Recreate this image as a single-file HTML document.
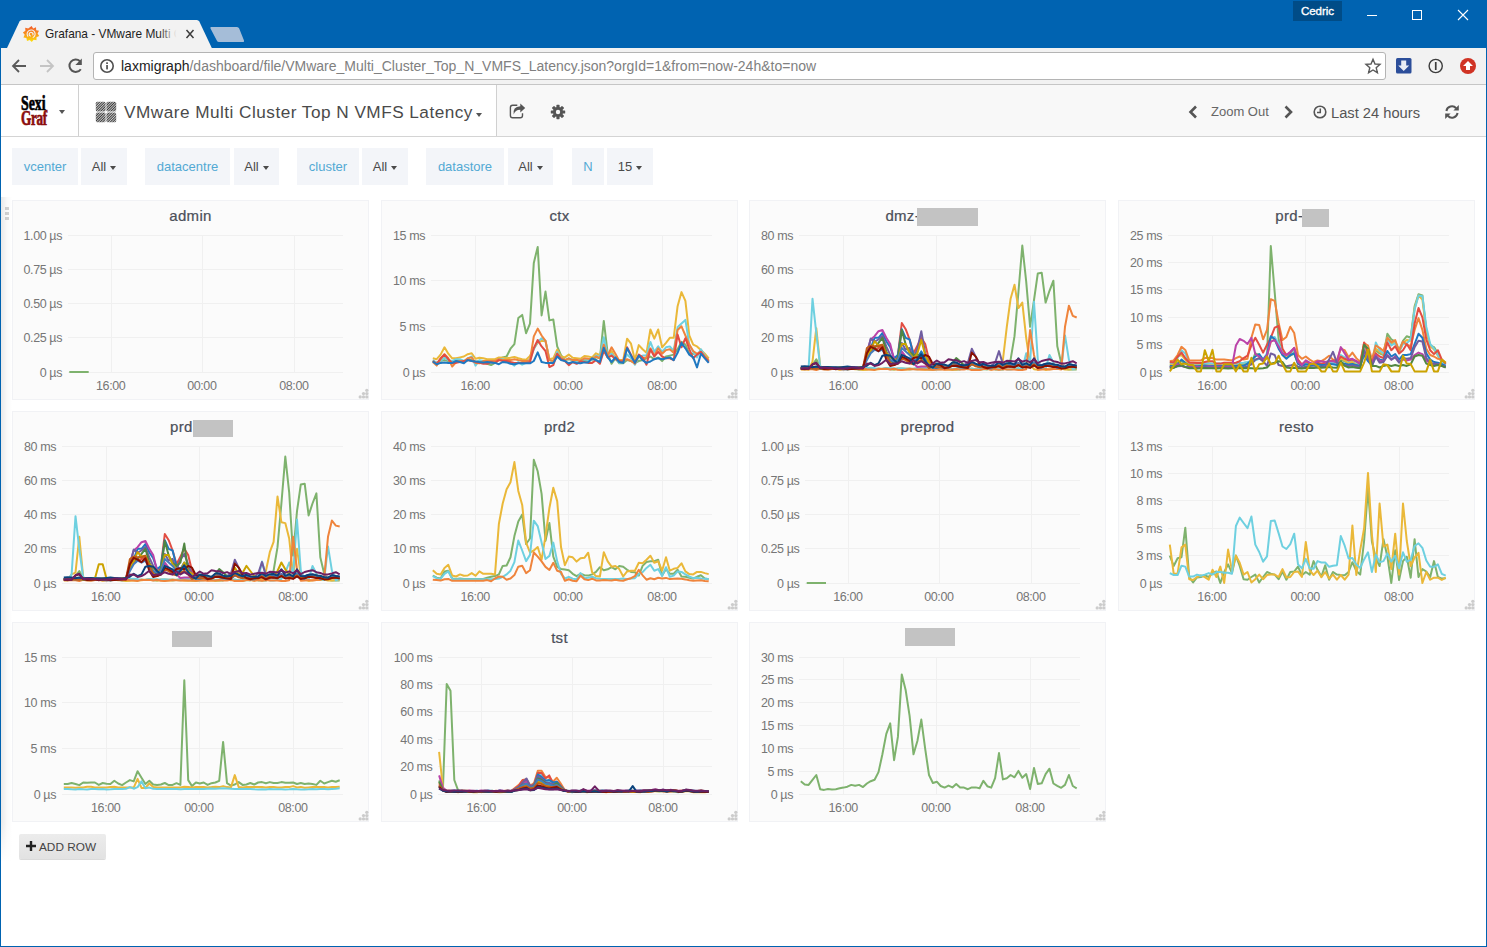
<!DOCTYPE html><html><head><meta charset="utf-8"><title>Grafana - VMware Multi Cluster Top N VMFS Latency</title><style>
*{box-sizing:border-box;margin:0;padding:0}
html,body{width:1487px;height:947px;overflow:hidden;background:#fff}
body{font-family:"Liberation Sans",sans-serif;position:relative;color:#444}
.abs{position:absolute}
#titlebar{left:0;top:0;width:1487px;height:48px;background:#0063b1}
#toolbar{left:1px;top:48px;width:1485px;height:37px;background:#f2f2f2;border-bottom:1px solid #c6c6c6}
#urlbox{left:92px;top:4px;width:1293px;height:28px;background:#fff;border:1px solid #b4b4b4;border-radius:3px}
#nav{left:1px;top:85px;width:1485px;height:52px;background:#f8f8f8;border-bottom:1px solid #d4d4d4}
#navwhite{left:0;top:0;width:496px;height:51px;background:#fff;border-right:1px solid #d0d0d0}
.wb{background:#0063b1}
.tv{top:148px;height:37px;background:#f3f5f9;font-size:13px;line-height:37px;text-align:center;white-space:nowrap}
.tv.l{color:#52a9d4}
.tv.v{color:#4a4a4a}
.caret{display:inline-block;width:0;height:0;border-left:3.5px solid transparent;border-right:3.5px solid transparent;border-top:4px solid #4a4a4a;vertical-align:middle;margin-left:4px}
.panel{background:#fbfbfb;border:1px solid #f1f2f5;width:357px;height:200px}
.ptitle{left:0;width:355px;top:5px;text-align:center;font-size:15px;font-weight:normal;-webkit-text-stroke:0.22px #4b4f59;color:#4b4f59;line-height:20px;white-space:nowrap;letter-spacing:0.3px}
.red{display:inline-block;background:#c0c0c0;vertical-align:top}
svg text{font-family:"Liberation Sans",sans-serif;font-size:12.5px;fill:#767676;letter-spacing:-0.4px}
</style></head><body>
<div id="titlebar" class="abs">
  <svg class="abs" style="left:0;top:0" width="1487" height="48" viewBox="0 0 1487 48">
    <path d="M7 48 L19.5 21.5 Q20.3 20 22 20 L196.8 20 Q198.5 20 199.3 21.5 L211.8 48 Z" fill="#f2f2f2"/>
    <path d="M211 27 L237 27 Q238.5 27 239.2 28.5 L244 40.5 Q244.5 42 243 42 L219 42 Q217.5 42 216.8 40.5 L210.5 28.5 Q210 27 211 27Z" fill="#a5bdd8"/>
    <rect x="1293" y="1" width="49" height="20" fill="#004c87"/>
    <g stroke="#fff" stroke-width="1" fill="none" shape-rendering="crispEdges">
      <line x1="1367" x2="1377" y1="15.5" y2="15.5"/>
      <rect x="1412.5" y="10.5" width="9" height="9"/>
    </g>
    <path d="M1458 10 L1468 20 M1468 10 L1458 20" stroke="#fff" stroke-width="1.1" fill="none"/>
    <!-- grafana favicon -->
    <defs><linearGradient id="gfav" x1="0" y1="0" x2="0" y2="1"><stop offset="0" stop-color="#f1592a"/><stop offset="0.55" stop-color="#f99b1c"/><stop offset="1" stop-color="#fde408"/></linearGradient></defs>
    <g transform="translate(31,34)">
      <path d="M0.6-8 L2.2-5.6 L5-6.8 L5.2-3.8 L8-3.2 L6.6-0.5 L8.2 2 L5.5 3.3 L5.5 6.3 L2.6 5.7 L0.8 8 L-1.3 5.9 L-4 7 L-4.6 4.1 L-7.6 3.4 L-6.3 0.7 L-8.1-1.6 L-5.6-3.2 L-5.8-6.2 L-2.8-5.6 Z" fill="url(#gfav)"/>
      <path d="M-3.2 2.2 A4 4 0 1 1 2.2 3.4 M1.9 0.9 A1.9 1.9 0 1 0 -0.6 2" fill="none" stroke="#f2f2f2" stroke-width="1.1" stroke-linecap="round"/>
    </g>
    <path d="M186.5 30 L193.5 38 M193.5 30 L186.5 38" stroke="#3c3c3c" stroke-width="1.5" fill="none"/>
  </svg>
  <div class="abs" style="left:45px;top:25px;width:134px;height:18px;overflow:hidden;font-size:11.9px;line-height:18px;color:#1e1e1e;white-space:nowrap">Grafana - VMware Multi Cluster</div>
  <div class="abs" style="left:159px;top:24px;width:22px;height:20px;background:linear-gradient(90deg,rgba(242,242,242,0),#f2f2f2 80%)"></div>
  <div class="abs" style="left:1293px;top:1px;width:49px;height:20px;font-size:11.5px;line-height:20px;color:#fff;text-align:center;font-weight:normal;-webkit-text-stroke:0.35px #fff;letter-spacing:0px">Cedric</div>
</div>
<div class="abs wb" style="left:0;top:48px;width:1px;height:899px"></div>
<div class="abs wb" style="left:1486px;top:48px;width:1px;height:899px"></div>
<div class="abs wb" style="left:0;top:946px;width:1487px;height:1px"></div>
<div id="toolbar" class="abs">
  <svg class="abs" style="left:0;top:0" width="92" height="36" viewBox="1 48 92 36">
    <g fill="none" stroke="#5a5a5a" stroke-width="1.8">
      <path d="M26 66 L13 66 M19 60 L13 66 L19 72"/>
    </g>
    <g fill="none" stroke="#c4c4c4" stroke-width="1.8">
      <path d="M40 66 L53 66 M47 60 L53 66 L47 72"/>
    </g>
    <path d="M80 61.3 A6.2 6.2 0 1 0 80.8 69.2" fill="none" stroke="#555" stroke-width="2"/>
    <path d="M81.8 58.6 L81.8 65 L75.4 65 Z" fill="#555"/>
  </svg>
  <div id="urlbox" class="abs">
    <svg class="abs" style="left:5px;top:5px" width="16" height="16" viewBox="0 0 16 16"><circle cx="8" cy="8" r="6.2" fill="none" stroke="#505050" stroke-width="1.6"/><rect x="7.2" y="7" width="1.7" height="4.4" fill="#505050"/><rect x="7.2" y="4.3" width="1.7" height="1.7" fill="#505050"/></svg>
    <div class="abs" style="left:27px;top:4px;font-size:14px;line-height:18px;white-space:nowrap;color:#808080"><span style="color:#222">laxmigraph</span>/dashboard/file/VMware_Multi_Cluster_Top_N_VMFS_Latency.json?orgId=1&amp;from=now-24h&amp;to=now</div>
    <svg class="abs" style="left:1270px;top:4px" width="18" height="18" viewBox="0 0 18 18"><path d="M9 2.2 L11 7 L16 7.4 L12.2 10.7 L13.4 15.7 L9 13 L4.6 15.7 L5.8 10.7 L2 7.4 L7 7 Z" fill="none" stroke="#5a5a5a" stroke-width="1.4" stroke-linejoin="miter"/></svg>
  </div>
  <svg class="abs" style="left:1390px;top:6px" width="92" height="26" viewBox="1391 54 92 26">
    <rect x="1396" y="58" width="15.5" height="15.5" rx="1.5" fill="#2c4e9a"/>
    <path d="M1401.2 60.5 h5 v5 h3 l-5.5 5.5 l-5.5 -5.5 h3 z" fill="#e9edf5"/>
    <circle cx="1435.7" cy="66" r="6.6" fill="none" stroke="#3c3c3c" stroke-width="1.4"/>
    <rect x="1434.9" y="62" width="1.7" height="8" fill="#3c3c3c"/>
    <circle cx="1468" cy="66" r="8" fill="#d03324"/>
    <path d="M1468 61 l5 5 h-3 v4 h-4 v-4 h-3 z" fill="#fff"/>
  </svg>
</div>
<div id="nav" class="abs">
  <div id="navwhite" class="abs"></div>
  <div class="abs" style="left:77px;top:0;width:1px;height:51px;background:#d0d0d0"></div>
  <div class="abs" style="left:20px;top:11px;font-family:'Liberation Serif',serif;font-weight:bold;font-size:21px;line-height:15px;color:#000;-webkit-text-stroke:0.7px #000;transform:scaleX(0.66);transform-origin:0 0;white-space:nowrap">Sexi<br><span style="color:#8a0c0c;-webkit-text-stroke:0.7px #8a0c0c;font-size:20px;letter-spacing:-0.5px">Graf</span></div>
  <div class="abs caret" style="left:58px;top:25px;margin:0;border-top-color:#555"></div>
  <svg class="abs" style="left:94px;top:16px" width="22" height="22" viewBox="0 0 22 22">
    <defs><pattern id="hat" width="1.8" height="1.8" patternUnits="userSpaceOnUse" patternTransform="rotate(-45)"><rect width="1.8" height="1.15" fill="#3c3c3c"/></pattern></defs>
    <rect x="0.8" y="0.8" width="9.8" height="9.8" rx="1.5" fill="url(#hat)"/><rect x="11.4" y="0.8" width="9.8" height="9.8" rx="1.5" fill="url(#hat)"/><rect x="0.8" y="11.4" width="9.8" height="9.8" rx="1.5" fill="url(#hat)"/><rect x="11.4" y="11.4" width="9.8" height="9.8" rx="1.5" fill="url(#hat)"/>
  </svg>
  <div class="abs" style="left:123px;top:14px;font-size:17.2px;line-height:26px;color:#4a4a4a;white-space:nowrap;letter-spacing:0.48px">VMware Multi Cluster Top N VMFS Latency</div>
  <div class="abs caret" style="left:475px;top:28px;margin:0;border-top-color:#555"></div>
  <svg class="abs" style="left:507px;top:18px" width="20" height="17" viewBox="0 0 20 17">
    <path d="M9.3 2.3 H4.6 Q2.4 2.3 2.4 4.5 V12.6 Q2.4 14.8 4.6 14.8 H12.3 Q14.5 14.8 14.5 12.6 V10.2" fill="none" stroke="#555" stroke-width="1.4"/>
    <path d="M12.3 0.6 L17.2 5 L12.3 9.4 V6.7 Q7 6.7 5.7 11.6 Q4.4 3.6 12.3 3.3 Z" fill="#555"/>
  </svg>
  <svg class="abs" style="left:549px;top:19px" width="16" height="16" viewBox="-8 -8 16 16">
    <g fill="#555"><circle r="5"/>
    <g><rect x="-1.6" y="-7.2" width="3.2" height="14.4" rx="0.6"/><rect x="-1.6" y="-7.2" width="3.2" height="14.4" rx="0.6" transform="rotate(45)"/><rect x="-1.6" y="-7.2" width="3.2" height="14.4" rx="0.6" transform="rotate(90)"/><rect x="-1.6" y="-7.2" width="3.2" height="14.4" rx="0.6" transform="rotate(135)"/></g></g>
    <circle r="2.2" fill="#f8f8f8"/>
  </svg>
  <svg class="abs" style="left:1185px;top:18px" width="112" height="18" viewBox="1186 103 112 18">
    <path d="M1196 106.5 L1190.5 112 L1196 117.5" fill="none" stroke="#555" stroke-width="2.6"/>
    <path d="M1285.5 106.5 L1291 112 L1285.5 117.5" fill="none" stroke="#555" stroke-width="2.6"/>
  </svg>
  <div class="abs" style="left:1210px;top:18px;font-size:13px;line-height:18px;color:#666;white-space:nowrap">Zoom Out</div>
  <svg class="abs" style="left:1311px;top:19px" width="16" height="16" viewBox="-8 -8 16 16"><circle r="5.8" fill="none" stroke="#555" stroke-width="1.6"/><path d="M0.3 -3.6 V0.6 H-3" fill="none" stroke="#555" stroke-width="1.5"/></svg>
  <div class="abs" style="left:1330px;top:17px;font-size:14.7px;line-height:22px;color:#555;white-space:nowrap">Last 24 hours</div>
  <svg class="abs" style="left:1443px;top:19px" width="16" height="16" viewBox="-8 -8 16 16">
    <path d="M-5.6 -1 A5.7 5.7 0 0 1 4.2 -3.8" fill="none" stroke="#555" stroke-width="2"/>
    <path d="M5.6 1 A5.7 5.7 0 0 1 -4.2 3.8" fill="none" stroke="#555" stroke-width="2"/>
    <path d="M6.8 -7 V-1.6 H1.4 Z" fill="#555"/><path d="M-6.8 7 V1.6 H-1.4 Z" fill="#555"/>
  </svg>
</div>
<div class="abs tv l" style="left:12px;width:66px">vcenter</div><div class="abs tv v" style="left:81px;width:46px">All<span class="caret"></span></div>
<div class="abs tv l" style="left:145px;width:85px">datacentre</div><div class="abs tv v" style="left:234px;width:45px">All<span class="caret"></span></div>
<div class="abs tv l" style="left:297px;width:62px">cluster</div><div class="abs tv v" style="left:362px;width:46px">All<span class="caret"></span></div>
<div class="abs tv l" style="left:426px;width:78px">datastore</div><div class="abs tv v" style="left:508px;width:45px">All<span class="caret"></span></div>
<div class="abs tv l" style="left:572px;width:32px">N</div><div class="abs tv v" style="left:607px;width:46px">15<span class="caret"></span></div>
<svg class="abs" style="left:4px;top:205.5px" width="6" height="18" viewBox="0 0 6 18"><g fill="#d4d4d4"><rect x="1" y="1" width="4" height="3"/><rect x="1" y="6" width="4" height="3"/><rect x="1" y="11" width="4" height="3"/></g></svg>
<div class="abs" style="left:1px;top:197px;width:11px;height:665px;background:linear-gradient(90deg,rgba(0,0,0,0.085),rgba(0,0,0,0.025) 55%,rgba(0,0,0,0))"></div><div class="abs" style="left:1px;top:822px;width:11px;height:40px;background:linear-gradient(180deg,rgba(255,255,255,0),#fff)"></div>

<div class="abs panel" style="left:12px;top:200px"><div class="abs ptitle">admin</div><svg class="abs" style="left:0;top:0;overflow:visible" width="355" height="198" viewBox="1 1 355 198"><g stroke="#f0f0f0" stroke-width="1" shape-rendering="crispEdges"><line x1="56.0" x2="330.7" y1="35.5" y2="35.5"/><line x1="56.0" x2="330.7" y1="69.5" y2="69.5"/><line x1="56.0" x2="330.7" y1="103.5" y2="103.5"/><line x1="56.0" x2="330.7" y1="137.5" y2="137.5"/><line x1="56.0" x2="330.7" y1="172.5" y2="172.5"/><line x1="99.5" x2="99.5" y1="35" y2="173"/><line x1="190.5" x2="190.5" y1="35" y2="173"/><line x1="282.5" x2="282.5" y1="35" y2="173"/></g><text x="50.0" y="40.0" text-anchor="end">1.00 µs</text><text x="50.0" y="74.0" text-anchor="end">0.75 µs</text><text x="50.0" y="108.0" text-anchor="end">0.50 µs</text><text x="50.0" y="142.0" text-anchor="end">0.25 µs</text><text x="50.0" y="177.0" text-anchor="end">0 µs</text><text x="98.7" y="190" text-anchor="middle">16:00</text><text x="189.8" y="190" text-anchor="middle">00:00</text><text x="281.9" y="190" text-anchor="middle">08:00</text><polyline fill="none" stroke="#7eb26d" stroke-width="2" stroke-linejoin="round" points="57.3,172.0 76.7,172.0"/><g fill="#cccccc"><circle cx="354.8" cy="190.3" r="1.65"/><circle cx="354.8" cy="193.6" r="1.65"/><circle cx="351.5" cy="193.6" r="1.65"/><circle cx="354.8" cy="196.9" r="1.65"/><circle cx="351.5" cy="196.9" r="1.65"/><circle cx="348.2" cy="196.9" r="1.65"/></g></svg></div>
<div class="abs panel" style="left:381px;top:200px"><div class="abs ptitle">ctx</div><svg class="abs" style="left:0;top:0;overflow:visible" width="355" height="198" viewBox="1 1 355 198"><g stroke="#f0f0f0" stroke-width="1" shape-rendering="crispEdges"><line x1="50.0" x2="330.6" y1="35.5" y2="35.5"/><line x1="50.0" x2="330.6" y1="80.5" y2="80.5"/><line x1="50.0" x2="330.6" y1="126.5" y2="126.5"/><line x1="50.0" x2="330.6" y1="172.5" y2="172.5"/><line x1="94.5" x2="94.5" y1="35" y2="173"/><line x1="187.5" x2="187.5" y1="35" y2="173"/><line x1="281.5" x2="281.5" y1="35" y2="173"/></g><text x="44.0" y="40.0" text-anchor="end">15 ms</text><text x="44.0" y="85.0" text-anchor="end">10 ms</text><text x="44.0" y="131.0" text-anchor="end">5 ms</text><text x="44.0" y="177.0" text-anchor="end">0 µs</text><text x="94.1" y="190" text-anchor="middle">16:00</text><text x="187.0" y="190" text-anchor="middle">00:00</text><text x="281.0" y="190" text-anchor="middle">08:00</text><polyline fill="none" stroke="#7eb26d" stroke-width="2" stroke-linejoin="round" points="51.8,161.0 55.7,162.9 59.6,161.0 63.5,160.1 67.3,161.0 71.2,162.0 75.1,161.0 79.0,161.0 82.9,162.0 86.8,160.1 90.7,160.1 94.5,162.0 98.4,161.0 102.3,162.0 106.2,163.8 110.1,165.1 114.0,162.9 117.9,159.2 121.7,157.4 125.6,156.5 129.5,148.7 133.4,144.1 137.3,118.1 141.2,114.9 145.1,133.2 149.0,123.6 152.8,62.9 156.7,46.9 160.6,115.4 164.5,91.6 168.4,120.4 172.3,119.5 176.2,146.4 180.0,155.1 183.9,160.1 187.8,159.2 191.7,160.1 195.6,161.0 199.5,161.0 203.4,160.1 207.2,161.0 211.1,160.1 215.0,157.4 218.9,158.3 222.8,120.9 226.7,153.7 230.6,163.8 234.4,158.3 238.3,163.3 242.2,163.3 246.1,160.1 250.0,161.0 253.9,162.9 257.8,161.0 261.6,160.1 265.5,158.3 269.4,156.5 273.3,159.2 277.2,157.4 281.1,161.0 285.0,156.5 288.8,155.6 292.7,154.6 296.6,149.2 300.5,141.9 304.4,144.6 308.3,153.7 312.2,153.7 316.0,155.6 319.9,150.1 323.8,156.5 327.7,161.0"/><polyline fill="none" stroke="#eab839" stroke-width="2" stroke-linejoin="round" points="51.8,158.3 55.7,159.2 59.6,154.6 63.5,147.3 67.3,153.7 71.2,158.3 75.1,158.3 79.0,157.4 82.9,156.5 86.8,154.2 90.7,153.3 94.5,158.8 98.4,157.8 102.3,158.3 106.2,159.2 110.1,159.2 114.0,159.2 117.9,157.4 121.7,157.8 125.6,158.3 129.5,157.8 133.4,156.9 137.3,158.3 141.2,159.2 145.1,159.7 149.0,156.0 152.8,148.3 156.7,142.8 160.6,140.9 164.5,140.9 168.4,159.2 172.3,158.3 176.2,149.6 180.0,156.5 183.9,157.4 187.8,154.6 191.7,157.8 195.6,158.3 199.5,158.8 203.4,156.0 207.2,156.5 211.1,157.4 215.0,153.3 218.9,155.1 222.8,149.2 226.7,157.4 230.6,151.0 234.4,158.3 238.3,160.1 242.2,160.1 246.1,138.7 250.0,143.7 253.9,160.1 257.8,145.1 261.6,149.2 265.5,152.8 269.4,129.5 273.3,138.7 277.2,129.5 281.1,147.3 285.0,142.8 288.8,137.8 292.7,137.8 296.6,106.2 300.5,92.1 304.4,100.8 308.3,135.5 312.2,144.6 316.0,146.4 319.9,150.1 323.8,153.7 327.7,158.3"/><polyline fill="none" stroke="#6ed0e0" stroke-width="2" stroke-linejoin="round" points="51.8,160.1 55.7,162.9 59.6,161.0 63.5,157.4 67.3,160.1 71.2,161.0 75.1,159.2 79.0,159.2 82.9,161.0 86.8,158.3 90.7,156.5 94.5,165.6 98.4,160.1 102.3,161.0 106.2,162.0 110.1,162.9 114.0,162.0 117.9,159.2 121.7,159.2 125.6,160.1 129.5,162.9 133.4,165.6 137.3,162.0 141.2,164.7 145.1,162.9 149.0,159.2 152.8,149.2 156.7,141.9 160.6,138.2 164.5,140.9 168.4,160.1 172.3,162.0 176.2,151.9 180.0,158.3 183.9,160.1 187.8,158.3 191.7,160.1 195.6,161.0 199.5,160.1 203.4,159.2 207.2,160.1 211.1,160.1 215.0,155.6 218.9,156.5 222.8,137.3 226.7,155.6 230.6,153.7 234.4,158.3 238.3,162.9 242.2,162.0 246.1,154.6 250.0,158.3 253.9,164.7 257.8,156.5 261.6,155.6 265.5,155.6 269.4,141.9 273.3,151.9 277.2,146.4 281.1,151.9 285.0,147.3 288.8,146.4 292.7,151.0 296.6,127.2 300.5,123.6 304.4,119.9 308.3,144.6 312.2,151.9 316.0,157.4 319.9,149.2 323.8,155.6 327.7,161.0"/><polyline fill="none" stroke="#ef843c" stroke-width="2" stroke-linejoin="round" points="51.8,162.0 55.7,165.6 59.6,159.2 63.5,154.2 67.3,158.3 71.2,166.5 75.1,162.0 79.0,161.0 82.9,162.0 86.8,158.3 90.7,157.4 94.5,162.9 98.4,163.3 102.3,161.0 106.2,161.0 110.1,161.0 114.0,161.0 117.9,159.2 121.7,160.1 125.6,160.1 129.5,160.1 133.4,159.2 137.3,160.1 141.2,161.0 145.1,161.0 149.0,160.1 152.8,136.4 156.7,128.6 160.6,135.5 164.5,140.9 168.4,160.1 172.3,161.0 176.2,153.7 180.0,158.3 183.9,160.1 187.8,158.3 191.7,160.1 195.6,159.7 199.5,160.6 203.4,158.3 207.2,158.8 211.1,159.2 215.0,156.5 218.9,158.3 222.8,144.6 226.7,155.6 230.6,147.3 234.4,153.7 238.3,161.0 242.2,160.1 246.1,159.2 250.0,161.0 253.9,163.8 257.8,155.6 261.6,158.3 265.5,157.4 269.4,148.3 273.3,155.6 277.2,148.3 281.1,153.7 285.0,150.1 288.8,149.2 292.7,152.8 296.6,130.0 300.5,126.3 304.4,135.5 308.3,144.6 312.2,151.0 316.0,153.7 319.9,151.9 323.8,156.5 327.7,160.1"/><polyline fill="none" stroke="#e24d42" stroke-width="2" stroke-linejoin="round" points="51.8,161.0 55.7,163.8 59.6,158.3 63.5,154.6 67.3,159.2 71.2,162.9 75.1,162.9 79.0,162.0 82.9,161.0 86.8,160.1 90.7,161.0 94.5,162.0 98.4,162.9 102.3,163.8 106.2,163.8 110.1,162.0 114.0,162.9 117.9,160.1 121.7,161.0 125.6,161.0 129.5,162.0 133.4,162.9 137.3,162.9 141.2,162.9 145.1,162.9 149.0,162.0 152.8,148.3 156.7,140.0 160.6,146.4 164.5,151.0 168.4,167.0 172.3,165.1 176.2,153.7 180.0,159.2 183.9,161.0 187.8,165.1 191.7,162.0 195.6,163.8 199.5,161.5 203.4,162.0 207.2,162.9 211.1,162.9 215.0,160.1 218.9,163.8 222.8,151.0 226.7,157.4 230.6,155.6 234.4,159.2 238.3,161.0 242.2,162.0 246.1,147.3 250.0,154.6 253.9,162.9 257.8,154.6 261.6,157.4 265.5,164.7 269.4,149.2 273.3,156.5 277.2,151.9 281.1,156.5 285.0,158.3 288.8,158.3 292.7,160.1 296.6,134.6 300.5,147.3 304.4,138.2 308.3,149.2 312.2,158.3 316.0,154.6 319.9,151.9 323.8,157.4 327.7,162.0"/><polyline fill="none" stroke="#1f78c1" stroke-width="2" stroke-linejoin="round" points="51.8,161.5 55.7,164.2 59.6,162.9 63.5,162.4 67.3,162.9 71.2,162.9 75.1,161.0 79.0,162.0 82.9,163.3 86.8,160.1 90.7,161.0 94.5,161.5 98.4,162.0 102.3,162.4 106.2,162.0 110.1,162.4 114.0,162.9 117.9,164.2 121.7,162.0 125.6,162.4 129.5,163.8 133.4,164.2 137.3,163.3 141.2,163.3 145.1,163.3 149.0,163.3 152.8,161.0 156.7,152.4 160.6,162.0 164.5,162.9 168.4,162.9 172.3,162.9 176.2,156.5 180.0,160.1 183.9,161.0 187.8,163.3 191.7,162.0 195.6,162.9 199.5,163.3 203.4,162.4 207.2,162.4 211.1,158.3 215.0,160.1 218.9,162.0 222.8,147.8 226.7,157.4 230.6,162.0 234.4,157.4 238.3,162.0 242.2,162.9 246.1,148.3 250.0,155.6 253.9,162.9 257.8,155.6 261.6,160.1 265.5,162.9 269.4,161.5 273.3,159.2 277.2,158.3 281.1,159.2 285.0,158.3 288.8,157.4 292.7,160.1 296.6,152.8 300.5,142.8 304.4,148.3 308.3,154.6 312.2,157.4 316.0,167.4 319.9,153.7 323.8,158.3 327.7,162.9"/><g fill="#cccccc"><circle cx="354.8" cy="190.3" r="1.65"/><circle cx="354.8" cy="193.6" r="1.65"/><circle cx="351.5" cy="193.6" r="1.65"/><circle cx="354.8" cy="196.9" r="1.65"/><circle cx="351.5" cy="196.9" r="1.65"/><circle cx="348.2" cy="196.9" r="1.65"/></g></svg></div>
<div class="abs panel" style="left:749px;top:200px"><div class="abs ptitle" style="text-align:left;left:135.4px;width:auto">dmz-</div><div class="abs" style="left:167px;top:7px;width:61px;height:18px;background:#c3c3c3"></div><svg class="abs" style="left:0;top:0;overflow:visible" width="355" height="198" viewBox="1 1 355 198"><g stroke="#f0f0f0" stroke-width="1" shape-rendering="crispEdges"><line x1="50.0" x2="330.6" y1="35.5" y2="35.5"/><line x1="50.0" x2="330.6" y1="69.5" y2="69.5"/><line x1="50.0" x2="330.6" y1="103.5" y2="103.5"/><line x1="50.0" x2="330.6" y1="137.5" y2="137.5"/><line x1="50.0" x2="330.6" y1="172.5" y2="172.5"/><line x1="94.5" x2="94.5" y1="35" y2="173"/><line x1="187.5" x2="187.5" y1="35" y2="173"/><line x1="281.5" x2="281.5" y1="35" y2="173"/></g><text x="44.0" y="40.0" text-anchor="end">80 ms</text><text x="44.0" y="74.0" text-anchor="end">60 ms</text><text x="44.0" y="108.0" text-anchor="end">40 ms</text><text x="44.0" y="142.0" text-anchor="end">20 ms</text><text x="44.0" y="177.0" text-anchor="end">0 µs</text><text x="94.2" y="190" text-anchor="middle">16:00</text><text x="187.0" y="190" text-anchor="middle">00:00</text><text x="281.0" y="190" text-anchor="middle">08:00</text><polyline fill="none" stroke="#7eb26d" stroke-width="2" stroke-linejoin="round" points="51.8,168.3 55.7,168.3 59.6,168.6 63.5,165.1 67.3,159.3 71.2,166.9 75.1,168.8 79.0,168.5 82.9,169.0 86.8,168.7 90.7,168.4 94.5,168.3 98.4,169.4 102.3,168.8 106.2,168.5 110.1,169.6 114.0,169.5 117.9,168.9 121.7,168.3 125.6,169.5 129.5,168.4 133.4,169.0 137.3,168.6 141.2,169.3 145.1,169.5 148.9,168.5 152.8,168.5 156.7,168.7 160.6,168.6 164.5,168.9 168.4,169.2 172.3,168.8 176.2,169.0 180.0,169.5 183.9,169.6 187.8,169.2 191.7,169.2 195.6,168.6 199.5,168.4 203.4,169.5 207.2,169.6 211.1,169.4 215.0,168.3 218.9,169.3 222.8,168.5 226.7,169.5 230.6,169.5 234.4,169.0 238.3,169.4 242.2,168.4 246.1,169.4 250.0,169.3 253.9,169.5 257.8,167.5 261.6,159.7 265.5,136.2 269.4,92.5 273.3,45.6 277.2,81.6 281.1,126.8 285.0,100.2 288.8,73.4 292.7,72.7 296.6,102.6 300.5,90.8 304.4,80.7 308.3,146.3 312.2,162.8 316.0,168.7 319.9,169.4 323.8,169.4 327.7,169.6"/><polyline fill="none" stroke="#eab839" stroke-width="2" stroke-linejoin="round" points="51.8,169.6 55.7,169.3 59.6,169.8 63.5,161.7 67.3,128.2 71.2,166.0 75.1,168.8 79.0,168.6 82.9,168.8 86.8,168.9 90.7,169.8 94.5,168.9 98.4,169.0 102.3,168.6 106.2,169.3 110.1,169.2 114.0,169.9 117.9,169.7 121.7,169.3 125.6,169.4 129.5,169.2 133.4,168.7 137.3,168.8 141.2,168.6 145.1,169.4 148.9,169.1 152.8,169.7 156.7,169.2 160.6,169.4 164.5,168.7 168.4,169.1 172.3,169.6 176.2,169.7 180.0,169.2 183.9,169.8 187.8,169.0 191.7,168.9 195.6,169.2 199.5,169.4 203.4,169.7 207.2,169.6 211.1,168.6 215.0,168.9 218.9,168.8 222.8,169.2 226.7,169.7 230.6,169.8 234.4,168.7 238.3,169.0 242.2,169.5 246.1,169.0 250.0,168.7 253.9,160.0 257.8,126.8 261.6,98.7 265.5,84.7 269.4,108.1 273.3,102.6 277.2,137.8 281.1,164.3 285.0,169.2 288.8,169.8 292.7,168.7 296.6,169.9 300.5,169.2 304.4,168.9 308.3,168.9 312.2,168.6 316.0,169.5 319.9,169.4 323.8,169.1 327.7,168.6"/><polyline fill="none" stroke="#6ed0e0" stroke-width="2" stroke-linejoin="round" points="51.8,168.5 55.7,169.4 59.6,168.5 63.5,98.7 67.3,133.1 71.2,166.9 75.1,169.2 79.0,169.3 82.9,168.9 86.8,167.9 90.7,168.9 94.5,168.4 98.4,169.0 102.3,168.8 106.2,169.1 110.1,169.3 114.0,167.8 117.9,167.9 121.7,167.8 125.6,168.1 129.5,169.1 133.4,168.8 137.3,167.9 141.2,168.2 145.1,168.3 148.9,168.7 152.8,168.4 156.7,168.7 160.6,169.3 164.5,169.0 168.4,167.7 172.3,167.8 176.2,168.0 180.0,167.8 183.9,169.1 187.8,169.3 191.7,169.1 195.6,168.7 199.5,167.9 203.4,168.9 207.2,168.6 211.1,168.2 215.0,168.4 218.9,168.8 222.8,169.0 226.7,169.0 230.6,169.3 234.4,168.9 238.3,168.9 242.2,168.2 246.1,169.0 250.0,168.5 253.9,167.9 257.8,169.4 261.6,169.4 265.5,168.7 269.4,168.0 273.3,169.3 277.2,153.3 281.1,162.8 285.0,101.8 288.8,159.7 292.7,168.2 296.6,168.6 300.5,154.9 304.4,162.8 308.3,168.0 312.2,169.1 316.0,135.4 319.9,159.7 323.8,169.3 327.7,167.8"/><polyline fill="none" stroke="#ef843c" stroke-width="2" stroke-linejoin="round" points="51.8,169.0 55.7,169.4 59.6,168.9 63.5,169.2 67.3,170.0 71.2,168.8 75.1,169.5 79.0,169.8 82.9,169.1 86.8,168.8 90.7,169.3 94.5,169.6 98.4,168.9 102.3,169.1 106.2,168.8 110.1,169.2 114.0,168.8 117.9,169.3 121.7,169.5 125.6,169.9 129.5,168.9 133.4,169.0 137.3,168.8 141.2,169.5 145.1,168.8 148.9,169.8 152.8,170.1 156.7,169.6 160.6,169.0 164.5,169.3 168.4,169.6 172.3,169.3 176.2,169.4 180.0,169.5 183.9,169.7 187.8,169.5 191.7,169.3 195.6,169.7 199.5,169.6 203.4,169.6 207.2,169.1 211.1,169.4 215.0,169.5 218.9,168.8 222.8,170.1 226.7,169.7 230.6,170.0 234.4,169.1 238.3,168.9 242.2,169.9 246.1,169.0 250.0,169.9 253.9,169.0 257.8,169.4 261.6,169.6 265.5,169.4 269.4,170.0 273.3,169.9 277.2,169.3 281.1,130.0 285.0,154.9 288.8,169.8 292.7,169.5 296.6,168.9 300.5,169.5 304.4,169.0 308.3,168.8 312.2,169.6 316.0,126.8 319.9,105.7 323.8,115.8 327.7,117.5"/><polyline fill="none" stroke="#e24d42" stroke-width="2" stroke-linejoin="round" points="51.8,168.7 55.7,168.8 59.6,168.4 63.5,167.8 67.3,167.4 71.2,168.6 75.1,167.6 79.0,168.3 82.9,168.6 86.8,168.7 90.7,167.5 94.5,168.6 98.4,168.2 102.3,168.7 106.2,167.8 110.1,168.6 114.0,167.4 117.9,158.3 121.7,151.4 125.6,149.7 129.5,148.0 133.4,146.3 137.3,154.9 141.2,160.0 145.1,163.4 148.9,154.9 152.8,123.0 156.7,129.2 160.6,139.5 164.5,153.3 168.4,145.6 172.3,137.8 176.2,144.1 180.0,159.7 183.9,165.1 187.8,166.6 191.7,167.0 195.6,167.4 199.5,166.4 203.4,164.5 207.2,164.4 211.1,166.5 215.0,166.5 218.9,166.7 222.8,163.5 226.7,165.2 230.6,166.9 234.4,166.8 238.3,167.2 242.2,167.0 246.1,167.0 250.0,163.9 253.9,166.7 257.8,166.4 261.6,165.2 265.5,166.0 269.4,164.9 273.3,166.6 277.2,165.9 281.1,167.3 285.0,163.7 288.8,166.4 292.7,166.7 296.6,165.4 300.5,164.7 304.4,165.1 308.3,167.6 312.2,167.3 316.0,167.8 319.9,166.6 323.8,167.0 327.7,166.6"/><polyline fill="none" stroke="#1f78c1" stroke-width="2" stroke-linejoin="round" points="51.8,168.5 55.7,168.2 59.6,168.0 63.5,168.2 67.3,168.1 71.2,168.5 75.1,169.1 79.0,168.4 82.9,168.1 86.8,168.8 90.7,169.1 94.5,169.2 98.4,169.2 102.3,168.4 106.2,168.6 110.1,168.0 114.0,167.8 117.9,156.6 121.7,148.0 125.6,137.8 129.5,137.8 133.4,133.1 137.3,141.2 141.2,147.2 145.1,158.3 148.9,154.9 152.8,129.2 156.7,137.8 160.6,139.5 164.5,154.9 168.4,158.3 172.3,151.4 176.2,158.3 180.0,163.4 183.9,167.6 187.8,167.9 191.7,166.7 195.6,168.0 199.5,167.6 203.4,164.9 207.2,166.2 211.1,167.3 215.0,167.2 218.9,167.8 222.8,164.6 226.7,165.6 230.6,167.3 234.4,166.5 238.3,168.2 242.2,168.3 246.1,166.4 250.0,165.1 253.9,167.2 257.8,165.9 261.6,166.8 265.5,166.3 269.4,165.1 273.3,166.8 277.2,166.8 281.1,167.2 285.0,164.8 288.8,167.5 292.7,167.5 296.6,165.2 300.5,165.3 304.4,165.5 308.3,167.8 312.2,167.2 316.0,167.1 319.9,166.6 323.8,166.6 327.7,167.0"/><polyline fill="none" stroke="#ba43a9" stroke-width="2" stroke-linejoin="round" points="51.8,167.4 55.7,168.4 59.6,168.5 63.5,167.7 67.3,168.0 71.2,167.6 75.1,168.0 79.0,167.6 82.9,168.5 86.8,168.1 90.7,168.1 94.5,167.2 98.4,167.6 102.3,167.2 106.2,168.5 110.1,168.2 114.0,167.3 117.9,151.8 121.7,139.5 125.6,136.2 129.5,131.2 133.4,130.0 137.3,137.8 141.2,144.1 145.1,159.7 148.9,163.4 152.8,151.4 156.7,156.6 160.6,160.0 164.5,163.4 168.4,167.0 172.3,166.6 176.2,166.6 180.0,166.3 183.9,166.8 187.8,166.6 191.7,165.1 195.6,165.8 199.5,166.1 203.4,163.7 207.2,164.8 211.1,165.1 215.0,166.6 218.9,166.0 222.8,163.9 226.7,164.4 230.6,166.5 234.4,166.7 238.3,166.6 242.2,166.9 246.1,166.5 250.0,164.6 253.9,166.6 257.8,165.8 261.6,165.3 265.5,165.3 269.4,163.7 273.3,165.7 277.2,164.7 281.1,166.1 285.0,164.1 288.8,165.8 292.7,165.4 296.6,165.2 300.5,164.3 304.4,164.5 308.3,166.9 312.2,166.2 316.0,167.0 319.9,165.3 323.8,165.0 327.7,166.3"/><polyline fill="none" stroke="#705da0" stroke-width="2" stroke-linejoin="round" points="51.8,168.3 55.7,167.2 59.6,167.6 63.5,167.4 67.3,168.1 71.2,166.9 75.1,167.2 79.0,167.1 82.9,167.5 86.8,167.6 90.7,167.4 94.5,167.3 98.4,168.0 102.3,167.9 106.2,167.0 110.1,167.0 114.0,167.1 117.9,154.9 121.7,138.6 125.6,141.7 129.5,139.5 133.4,136.0 137.3,146.3 141.2,154.9 145.1,161.7 148.9,160.0 152.8,142.9 156.7,149.7 160.6,148.0 164.5,158.3 168.4,148.7 172.3,131.2 176.2,153.3 180.0,163.4 183.9,166.3 187.8,167.3 191.7,165.7 195.6,165.7 199.5,166.6 203.4,163.0 207.2,163.9 211.1,165.1 215.0,164.8 218.9,162.8 222.8,148.7 226.7,156.6 230.6,163.4 234.4,165.5 238.3,166.9 242.2,165.8 246.1,162.8 250.0,151.1 253.9,164.3 257.8,164.4 261.6,164.2 265.5,164.7 269.4,162.8 273.3,165.1 277.2,164.7 281.1,165.3 285.0,162.4 288.8,166.2 292.7,165.4 296.6,163.9 300.5,163.8 304.4,164.0 308.3,166.4 312.2,167.3 316.0,167.3 319.9,166.1 323.8,165.5 327.7,166.0"/><polyline fill="none" stroke="#508642" stroke-width="2" stroke-linejoin="round" points="51.8,168.1 55.7,168.3 59.6,167.2 63.5,167.8 67.3,167.0 71.2,168.5 75.1,167.0 79.0,167.2 82.9,167.0 86.8,167.7 90.7,167.3 94.5,167.9 98.4,167.3 102.3,167.6 106.2,167.7 110.1,168.1 114.0,167.4 117.9,158.3 121.7,149.7 125.6,148.0 129.5,142.9 133.4,137.8 137.3,151.4 141.2,160.0 145.1,163.4 148.9,158.3 152.8,130.0 156.7,144.6 160.6,152.3 164.5,154.9 168.4,154.2 172.3,158.3 176.2,161.7 180.0,165.1 183.9,166.5 187.8,166.9 191.7,165.4 195.6,166.3 199.5,166.1 203.4,163.3 207.2,158.1 211.1,161.2 215.0,165.4 218.9,165.7 222.8,163.1 226.7,164.2 230.6,166.5 234.4,165.2 238.3,166.3 242.2,167.1 246.1,166.3 250.0,164.1 253.9,166.9 257.8,165.7 261.6,165.8 265.5,166.7 269.4,164.7 273.3,165.3 277.2,165.6 281.1,166.9 285.0,163.4 288.8,165.7 292.7,166.2 296.6,165.4 300.5,164.4 304.4,164.4 308.3,166.6 312.2,167.2 316.0,166.5 319.9,166.0 323.8,165.1 327.7,166.4"/><polyline fill="none" stroke="#cca300" stroke-width="2" stroke-linejoin="round" points="51.8,167.9 55.7,167.7 59.6,168.5 63.5,168.1 67.3,167.7 71.2,168.4 75.1,168.5 79.0,167.2 82.9,168.3 86.8,167.8 90.7,168.8 94.5,168.5 98.4,168.3 102.3,168.9 106.2,168.5 110.1,167.4 114.0,167.8 117.9,156.6 121.7,150.3 125.6,141.2 129.5,145.6 133.4,144.8 137.3,153.3 141.2,156.6 145.1,159.7 148.9,161.2 152.8,144.1 156.7,144.1 160.6,153.3 164.5,158.3 168.4,153.3 172.3,140.1 176.2,154.9 180.0,162.8 183.9,166.7 187.8,166.6 191.7,166.8 195.6,166.9 199.5,167.3 203.4,163.7 207.2,165.9 211.1,166.6 215.0,166.1 218.9,166.8 222.8,164.1 226.7,164.5 230.6,166.9 234.4,166.6 238.3,167.3 242.2,166.7 246.1,167.4 250.0,165.3 253.9,167.4 257.8,165.2 261.6,165.6 265.5,166.9 269.4,164.9 273.3,165.5 277.2,166.5 281.1,166.8 285.0,164.5 288.8,166.8 292.7,167.0 296.6,165.2 300.5,165.1 304.4,166.5 308.3,166.8 312.2,167.2 316.0,167.4 319.9,165.9 323.8,166.4 327.7,166.8"/><polyline fill="none" stroke="#447ebc" stroke-width="2" stroke-linejoin="round" points="51.8,167.1 55.7,168.2 59.6,167.6 63.5,167.9 67.3,167.9 71.2,167.7 75.1,167.7 79.0,168.4 82.9,167.2 86.8,167.3 90.7,168.1 94.5,168.6 98.4,167.0 102.3,168.0 106.2,167.0 110.1,167.9 114.0,167.6 117.9,160.0 121.7,153.2 125.6,149.7 129.5,151.4 133.4,149.7 137.3,156.6 141.2,160.0 145.1,161.7 148.9,160.0 152.8,148.0 156.7,151.4 160.6,154.9 164.5,160.0 168.4,160.0 172.3,156.6 176.2,161.7 180.0,165.1 183.9,166.2 187.8,167.3 191.7,165.6 195.6,166.7 199.5,166.1 203.4,164.7 207.2,165.0 211.1,166.5 215.0,165.9 218.9,167.1 222.8,164.0 226.7,163.9 230.6,166.4 234.4,165.5 238.3,166.0 242.2,167.4 246.1,166.1 250.0,163.6 253.9,167.2 257.8,165.6 261.6,164.5 265.5,166.3 269.4,164.0 273.3,166.6 277.2,164.8 281.1,166.0 285.0,162.7 288.8,167.2 292.7,165.3 296.6,163.9 300.5,164.6 304.4,166.0 308.3,166.2 312.2,166.5 316.0,167.7 319.9,165.0 323.8,165.1 327.7,166.5"/><polyline fill="none" stroke="#c15c17" stroke-width="2" stroke-linejoin="round" points="51.8,168.8 55.7,168.0 59.6,167.7 63.5,168.5 67.3,168.7 71.2,168.0 75.1,167.9 79.0,168.7 82.9,168.7 86.8,167.8 90.7,168.3 94.5,167.9 98.4,168.3 102.3,168.0 106.2,168.1 110.1,167.7 114.0,168.2 117.9,148.0 121.7,145.6 125.6,146.3 129.5,146.3 133.4,144.8 137.3,154.9 141.2,162.8 145.1,165.1 148.9,163.4 152.8,158.3 156.7,160.0 160.6,163.4 164.5,164.3 168.4,161.7 172.3,160.0 176.2,163.4 180.0,168.1 183.9,166.9 187.8,167.3 191.7,167.3 195.6,167.6 199.5,167.6 203.4,165.5 207.2,165.6 211.1,166.1 215.0,166.9 218.9,166.9 222.8,164.0 226.7,166.3 230.6,167.1 234.4,167.2 238.3,167.4 242.2,167.4 246.1,167.5 250.0,165.2 253.9,167.9 257.8,165.7 261.6,166.4 265.5,166.9 269.4,164.8 273.3,167.1 277.2,166.2 281.1,166.5 285.0,164.4 288.8,167.0 292.7,166.5 296.6,165.9 300.5,165.6 304.4,166.7 308.3,166.9 312.2,168.4 316.0,167.3 319.9,167.0 323.8,166.8 327.7,167.3"/><polyline fill="none" stroke="#890f02" stroke-width="2" stroke-linejoin="round" points="51.8,168.7 55.7,168.9 59.6,168.8 63.5,164.3 67.3,163.4 71.2,168.0 75.1,169.1 79.0,168.8 82.9,168.4 86.8,169.3 90.7,168.2 94.5,168.4 98.4,169.2 102.3,169.1 106.2,168.7 110.1,168.6 114.0,168.6 117.9,153.3 121.7,146.8 125.6,148.7 129.5,151.1 133.4,147.2 137.3,159.7 141.2,166.0 145.1,165.1 148.9,163.4 152.8,156.6 156.7,158.3 160.6,161.2 164.5,158.1 168.4,157.3 172.3,158.3 176.2,154.9 180.0,156.6 183.9,164.3 187.8,164.3 191.7,165.1 195.6,168.2 199.5,167.3 203.4,165.9 207.2,165.8 211.1,166.8 215.0,167.5 218.9,167.9 222.8,152.6 226.7,156.6 230.6,164.3 234.4,167.0 238.3,168.3 242.2,167.1 246.1,167.1 250.0,166.3 253.9,168.4 257.8,166.8 261.6,166.4 265.5,167.2 269.4,165.0 273.3,167.4 277.2,167.0 281.1,167.9 285.0,165.4 288.8,168.0 292.7,167.3 296.6,165.8 300.5,166.2 304.4,167.1 308.3,167.1 312.2,168.4 316.0,168.2 319.9,167.0 323.8,166.6 327.7,167.6"/><polyline fill="none" stroke="#0a437c" stroke-width="2" stroke-linejoin="round" points="51.8,166.5 55.7,166.3 59.6,166.5 63.5,167.3 67.3,166.5 71.2,167.4 75.1,167.0 79.0,167.0 82.9,167.6 86.8,167.6 90.7,167.7 94.5,167.0 98.4,166.6 102.3,166.9 106.2,167.6 110.1,167.7 114.0,166.9 117.9,165.7 121.7,162.8 125.6,165.1 129.5,163.4 133.4,155.7 137.3,154.9 141.2,155.7 145.1,160.0 148.9,163.4 152.8,154.9 156.7,156.6 160.6,158.3 164.5,164.3 168.4,159.7 172.3,154.2 176.2,161.2 180.0,166.0 183.9,167.7 187.8,163.4 191.7,163.9 195.6,164.6 199.5,165.9 203.4,162.6 207.2,162.3 211.1,164.7 215.0,165.5 218.9,164.7 222.8,161.9 226.7,163.7 230.6,165.2 234.4,163.8 238.3,165.4 242.2,165.8 246.1,165.5 250.0,162.1 253.9,164.9 257.8,163.2 261.6,163.0 265.5,164.6 269.4,158.3 273.3,164.8 277.2,163.1 281.1,165.4 285.0,158.3 288.8,165.0 292.7,165.2 296.6,163.7 300.5,163.2 304.4,164.4 308.3,164.7 312.2,166.2 316.0,166.8 319.9,164.0 323.8,164.9 327.7,165.5"/><polyline fill="none" stroke="#6d1f62" stroke-width="2" stroke-linejoin="round" points="51.8,168.8 55.7,168.3 59.6,168.7 63.5,164.3 67.3,162.8 71.2,168.2 75.1,167.6 79.0,167.9 82.9,167.9 86.8,168.5 90.7,168.4 94.5,168.4 98.4,168.5 102.3,167.4 106.2,167.5 110.1,167.9 114.0,168.1 117.9,163.8 121.7,163.4 125.6,166.0 129.5,165.1 133.4,162.8 137.3,159.7 141.2,164.3 145.1,163.4 148.9,163.4 152.8,161.2 156.7,162.8 160.6,163.4 164.5,160.5 168.4,163.4 172.3,161.2 176.2,163.4 180.0,166.0 183.9,163.4 187.8,160.5 191.7,162.8 195.6,162.3 199.5,159.2 203.4,160.0 207.2,160.2 211.1,162.1 215.0,161.1 218.9,162.8 222.8,160.9 226.7,160.1 230.6,162.3 234.4,161.9 238.3,163.7 242.2,162.7 246.1,162.0 250.0,161.7 253.9,162.6 257.8,160.8 261.6,161.0 265.5,161.6 269.4,159.2 273.3,161.7 277.2,160.4 281.1,162.3 285.0,159.2 288.8,163.2 292.7,161.0 296.6,160.0 300.5,159.2 304.4,161.2 308.3,161.9 312.2,163.6 316.0,163.4 319.9,162.4 323.8,161.2 327.7,163.3"/><g fill="#cccccc"><circle cx="354.8" cy="190.3" r="1.65"/><circle cx="354.8" cy="193.6" r="1.65"/><circle cx="351.5" cy="193.6" r="1.65"/><circle cx="354.8" cy="196.9" r="1.65"/><circle cx="351.5" cy="196.9" r="1.65"/><circle cx="348.2" cy="196.9" r="1.65"/></g></svg></div>
<div class="abs panel" style="left:1118px;top:200px"><div class="abs ptitle" style="text-align:left;left:156.3px;width:auto">prd-</div><div class="abs" style="left:183px;top:8px;width:27px;height:18px;background:#c3c3c3"></div><svg class="abs" style="left:0;top:0;overflow:visible" width="355" height="198" viewBox="1 1 355 198"><g stroke="#f0f0f0" stroke-width="1" shape-rendering="crispEdges"><line x1="50.0" x2="330.7" y1="35.5" y2="35.5"/><line x1="50.0" x2="330.7" y1="62.5" y2="62.5"/><line x1="50.0" x2="330.7" y1="89.5" y2="89.5"/><line x1="50.0" x2="330.7" y1="117.5" y2="117.5"/><line x1="50.0" x2="330.7" y1="144.5" y2="144.5"/><line x1="50.0" x2="330.7" y1="172.5" y2="172.5"/><line x1="94.5" x2="94.5" y1="35" y2="173"/><line x1="187.5" x2="187.5" y1="35" y2="173"/><line x1="281.5" x2="281.5" y1="35" y2="173"/></g><text x="44.0" y="40.0" text-anchor="end">25 ms</text><text x="44.0" y="67.0" text-anchor="end">20 ms</text><text x="44.0" y="94.0" text-anchor="end">15 ms</text><text x="44.0" y="122.0" text-anchor="end">10 ms</text><text x="44.0" y="149.0" text-anchor="end">5 ms</text><text x="44.0" y="177.0" text-anchor="end">0 µs</text><text x="94.0" y="190" text-anchor="middle">16:00</text><text x="187.1" y="190" text-anchor="middle">00:00</text><text x="280.7" y="190" text-anchor="middle">08:00</text><polyline fill="none" stroke="#7eb26d" stroke-width="2" stroke-linejoin="round" points="51.8,165.6 55.7,165.9 59.6,162.7 63.5,161.2 67.3,163.6 71.2,165.9 75.1,165.9 79.0,166.2 82.9,165.9 86.8,165.6 90.7,165.9 94.5,165.9 98.4,166.2 102.3,165.9 106.2,165.9 110.1,166.2 114.0,165.9 117.9,165.6 121.7,165.3 125.6,164.7 129.5,164.0 133.4,162.7 137.3,153.4 141.2,155.0 145.1,161.2 149.0,158.1 152.8,46.1 156.7,92.3 160.6,139.3 164.5,155.0 168.4,157.3 172.3,155.7 176.2,153.4 180.0,163.6 183.9,165.9 187.8,164.3 191.7,164.7 195.6,165.1 199.5,164.3 203.4,164.7 207.2,164.0 211.1,162.7 215.0,163.6 218.9,164.3 222.8,159.6 226.7,161.2 230.6,163.6 234.4,162.5 238.3,164.0 242.2,165.6 246.1,145.5 250.0,150.2 253.9,164.7 257.8,150.2 261.6,153.4 265.5,155.0 269.4,133.8 273.3,139.3 277.2,141.6 281.1,150.2 285.0,140.8 288.8,136.2 292.7,137.7 296.6,106.4 300.5,94.2 304.4,95.4 308.3,131.4 312.2,145.5 316.0,147.1 319.9,153.4 323.8,161.2 327.7,164.3"/><polyline fill="none" stroke="#eab839" stroke-width="2" stroke-linejoin="round" points="51.8,164.0 55.7,164.3 59.6,156.5 63.5,155.0 67.3,159.6 71.2,164.3 75.1,164.3 79.0,164.7 82.9,164.3 86.8,164.0 90.7,164.3 94.5,164.3 98.4,164.7 102.3,164.3 106.2,164.3 110.1,164.7 114.0,164.3 117.9,164.0 121.7,163.7 125.6,163.1 129.5,162.5 133.4,161.2 137.3,159.6 141.2,158.1 145.1,161.2 149.0,156.5 152.8,141.6 156.7,139.3 160.6,147.1 164.5,154.1 168.4,156.5 172.3,155.0 176.2,152.6 180.0,163.6 183.9,165.6 187.8,163.6 191.7,164.3 195.6,165.1 199.5,164.0 203.4,164.3 207.2,163.6 211.1,162.5 215.0,163.1 218.9,164.0 222.8,158.1 226.7,160.4 230.6,162.7 234.4,161.5 238.3,163.6 242.2,165.1 246.1,147.1 250.0,153.4 253.9,164.3 257.8,148.7 261.6,151.8 265.5,154.1 269.4,137.7 273.3,144.0 277.2,142.4 281.1,151.8 285.0,143.2 288.8,140.1 292.7,140.8 296.6,108.8 300.5,95.4 304.4,99.7 308.3,129.9 312.2,146.3 316.0,149.5 319.9,155.7 323.8,162.0 327.7,164.7"/><polyline fill="none" stroke="#6ed0e0" stroke-width="2" stroke-linejoin="round" points="51.8,162.7 55.7,162.7 59.6,158.1 63.5,150.2 67.3,153.4 71.2,162.7 75.1,163.6 79.0,163.6 82.9,163.8 86.8,163.6 90.7,163.2 94.5,163.6 98.4,163.8 102.3,163.6 106.2,163.6 110.1,163.8 114.0,163.6 117.9,163.6 121.7,163.1 125.6,162.7 129.5,162.0 133.4,161.2 137.3,160.4 141.2,158.8 145.1,159.6 149.0,153.4 152.8,137.7 156.7,136.9 160.6,144.0 164.5,151.8 168.4,155.0 172.3,153.4 176.2,150.2 180.0,162.7 183.9,165.1 187.8,162.7 191.7,164.3 195.6,164.7 199.5,163.6 203.4,164.0 207.2,163.6 211.1,162.0 215.0,162.7 218.9,163.6 222.8,155.0 226.7,157.3 230.6,161.2 234.4,159.6 238.3,162.5 242.2,164.3 246.1,146.3 250.0,153.4 253.9,163.6 257.8,142.4 261.6,150.2 265.5,153.4 269.4,137.7 273.3,145.5 277.2,143.2 281.1,151.8 285.0,144.0 288.8,143.2 292.7,139.3 296.6,109.5 300.5,95.4 304.4,96.2 308.3,126.7 312.2,144.0 316.0,148.7 319.9,155.0 323.8,162.7 327.7,165.1"/><polyline fill="none" stroke="#ef843c" stroke-width="2" stroke-linejoin="round" points="51.8,161.2 55.7,160.4 59.6,155.0 63.5,146.8 67.3,149.9 71.2,160.4 75.1,160.4 79.0,160.4 82.9,160.4 86.8,158.1 90.7,158.1 94.5,158.1 98.4,159.6 102.3,159.6 106.2,159.6 110.1,159.9 114.0,160.4 117.9,158.1 121.7,156.5 125.6,159.6 129.5,158.8 133.4,137.7 137.3,124.4 141.2,124.9 145.1,139.3 149.0,129.9 152.8,99.3 156.7,100.9 160.6,122.8 164.5,140.1 168.4,136.9 172.3,126.7 176.2,133.0 180.0,155.0 183.9,158.8 187.8,156.5 191.7,159.6 195.6,162.0 199.5,160.4 203.4,161.2 207.2,158.8 211.1,155.7 215.0,159.6 218.9,160.4 222.8,148.7 226.7,150.2 230.6,157.3 234.4,152.6 238.3,158.1 242.2,162.0 246.1,143.2 250.0,145.5 253.9,159.6 257.8,145.5 261.6,147.9 265.5,151.0 269.4,137.7 273.3,142.4 277.2,140.1 281.1,151.0 285.0,141.6 288.8,144.8 292.7,146.3 296.6,129.9 300.5,118.1 304.4,129.9 308.3,148.7 312.2,155.0 316.0,156.5 319.9,158.8 323.8,159.6 327.7,162.7"/><polyline fill="none" stroke="#e24d42" stroke-width="2" stroke-linejoin="round" points="51.8,162.0 55.7,162.5 59.6,156.8 63.5,152.6 67.3,158.1 71.2,162.7 75.1,162.7 79.0,163.1 82.9,163.1 86.8,162.0 90.7,161.2 94.5,161.2 98.4,163.6 102.3,163.6 106.2,162.7 110.1,162.7 114.0,163.1 117.9,162.7 121.7,161.2 125.6,158.1 129.5,155.7 133.4,145.5 137.3,137.7 141.2,144.8 145.1,152.6 149.0,144.8 152.8,137.7 156.7,127.6 160.6,126.0 164.5,148.7 168.4,155.0 172.3,152.6 176.2,147.9 180.0,159.6 183.9,164.3 187.8,161.2 191.7,163.6 195.6,164.3 199.5,162.7 203.4,163.6 207.2,162.7 211.1,161.2 215.0,160.4 218.9,162.7 222.8,156.5 226.7,158.8 230.6,160.4 234.4,159.6 238.3,161.2 242.2,164.3 246.1,142.4 250.0,153.4 253.9,162.7 257.8,153.4 261.6,156.5 265.5,158.1 269.4,142.4 273.3,150.2 277.2,146.3 281.1,153.4 285.0,150.2 288.8,144.0 292.7,150.2 296.6,123.6 300.5,107.9 304.4,117.4 308.3,139.3 312.2,150.2 316.0,154.1 319.9,150.2 323.8,159.6 327.7,163.6"/><polyline fill="none" stroke="#1f78c1" stroke-width="2" stroke-linejoin="round" points="51.8,165.9 55.7,166.2 59.6,164.3 63.5,159.6 67.3,162.7 71.2,165.9 75.1,165.9 79.0,166.2 82.9,165.9 86.8,165.6 90.7,165.9 94.5,165.9 98.4,166.2 102.3,165.9 106.2,165.9 110.1,166.2 114.0,165.9 117.9,165.9 121.7,165.6 125.6,165.9 129.5,163.6 133.4,160.4 137.3,156.5 141.2,154.1 145.1,159.6 149.0,155.0 152.8,136.2 156.7,139.3 160.6,148.7 164.5,155.0 168.4,158.8 172.3,155.0 176.2,153.4 180.0,163.6 183.9,165.9 187.8,164.3 191.7,165.1 195.6,165.6 199.5,164.3 203.4,165.1 207.2,164.7 211.1,164.0 215.0,164.3 218.9,165.1 222.8,162.7 226.7,163.6 230.6,164.7 234.4,164.0 238.3,165.1 242.2,165.9 246.1,155.0 250.0,161.2 253.9,165.6 257.8,156.5 261.6,159.6 265.5,160.4 269.4,151.0 273.3,156.5 277.2,154.1 281.1,159.6 285.0,155.0 288.8,155.0 292.7,154.1 296.6,144.0 300.5,133.8 304.4,137.7 308.3,153.4 312.2,159.6 316.0,162.0 319.9,162.7 323.8,164.3 327.7,165.9"/><polyline fill="none" stroke="#ba43a9" stroke-width="2" stroke-linejoin="round" points="51.8,167.1 55.7,166.7 59.6,164.3 63.5,165.9 67.3,166.7 71.2,167.0 75.1,166.7 79.0,166.7 82.9,167.0 86.8,166.7 90.7,166.4 94.5,166.7 98.4,167.0 102.3,166.7 106.2,166.7 110.1,167.0 114.0,166.7 117.9,145.5 121.7,139.0 125.6,140.8 129.5,144.0 133.4,137.7 137.3,154.1 141.2,156.5 145.1,160.4 149.0,155.0 152.8,141.6 156.7,140.1 160.6,146.3 164.5,153.4 168.4,155.0 172.3,151.8 176.2,147.9 180.0,162.0 183.9,165.1 187.8,160.4 191.7,162.7 195.6,164.3 199.5,161.2 203.4,161.2 207.2,162.0 211.1,161.2 215.0,161.2 218.9,162.0 222.8,147.1 226.7,153.4 230.6,159.6 234.4,158.8 238.3,161.2 242.2,163.6 246.1,151.8 250.0,158.1 253.9,163.6 257.8,155.0 261.6,161.2 265.5,161.2 269.4,155.0 273.3,159.6 277.2,156.5 281.1,162.0 285.0,159.6 288.8,160.4 292.7,159.6 296.6,155.0 300.5,152.6 304.4,154.1 308.3,160.4 312.2,163.6 316.0,164.3 319.9,164.3 323.8,165.9 327.7,166.7"/><polyline fill="none" stroke="#705da0" stroke-width="2" stroke-linejoin="round" points="51.8,167.8 55.7,167.5 59.6,166.2 63.5,165.9 67.3,167.1 71.2,167.5 75.1,167.5 79.0,167.8 82.9,167.5 86.8,167.1 90.7,167.5 94.5,167.5 98.4,167.8 102.3,167.5 106.2,167.5 110.1,167.8 114.0,167.5 117.9,167.5 121.7,167.1 125.6,167.5 129.5,166.2 133.4,164.3 137.3,159.6 141.2,158.1 145.1,161.2 149.0,165.9 152.8,153.4 156.7,155.0 160.6,165.1 164.5,165.9 168.4,166.2 172.3,165.6 176.2,164.3 180.0,166.7 183.9,167.8 187.8,166.7 191.7,167.1 195.6,167.5 199.5,166.7 203.4,166.8 207.2,166.2 211.1,159.6 215.0,151.8 218.9,162.7 222.8,164.3 226.7,165.1 230.6,165.9 234.4,165.6 238.3,166.2 242.2,167.1 246.1,150.2 250.0,158.1 253.9,165.9 257.8,156.5 261.6,162.7 265.5,162.0 269.4,155.7 273.3,159.6 277.2,157.3 281.1,162.7 285.0,158.1 288.8,158.8 292.7,158.1 296.6,147.1 300.5,140.8 304.4,141.6 308.3,158.1 312.2,162.7 316.0,163.6 319.9,164.3 323.8,165.9 327.7,167.1"/><polyline fill="none" stroke="#508642" stroke-width="2" stroke-linejoin="round" points="51.8,167.5 55.7,167.9 59.6,165.9 63.5,165.1 67.3,167.1 71.2,168.2 75.1,168.2 79.0,168.4 82.9,168.2 86.8,168.1 90.7,168.2 94.5,168.2 98.4,168.4 102.3,168.2 106.2,168.2 110.1,168.4 114.0,168.2 117.9,168.2 121.7,168.1 125.6,168.2 129.5,168.1 133.4,168.2 137.3,168.4 141.2,168.5 145.1,168.2 149.0,167.5 152.8,163.6 156.7,162.7 160.6,161.2 164.5,162.0 168.4,167.5 172.3,168.1 176.2,167.8 180.0,168.2 183.9,168.4 187.8,168.1 191.7,167.8 195.6,168.1 199.5,167.5 203.4,167.8 207.2,167.5 211.1,167.1 215.0,167.5 218.9,167.8 222.8,161.2 226.7,165.9 230.6,167.5 234.4,167.1 238.3,167.8 242.2,168.2 246.1,144.8 250.0,148.7 253.9,165.9 257.8,165.9 261.6,167.5 265.5,165.9 269.4,165.1 273.3,165.9 277.2,165.1 281.1,165.9 285.0,165.1 288.8,165.9 292.7,164.3 296.6,156.5 300.5,155.0 304.4,155.7 308.3,163.6 312.2,165.1 316.0,165.9 319.9,165.1 323.8,165.9 327.7,167.5"/><polyline fill="none" stroke="#cca300" stroke-width="2" stroke-linejoin="round" points="51.8,171.4 55.7,165.9 59.6,159.6 63.5,164.3 67.3,163.6 71.2,165.1 75.1,165.1 79.0,171.4 82.9,171.4 86.8,150.2 90.7,161.2 94.5,149.9 98.4,171.4 102.3,171.4 106.2,164.3 110.1,164.3 114.0,164.3 117.9,171.4 121.7,164.3 125.6,171.4 129.5,171.4 133.4,157.8 137.3,171.4 141.2,164.3 145.1,163.6 149.0,156.5 152.8,164.3 156.7,163.6 160.6,155.7 164.5,164.3 168.4,171.4 172.3,171.4 176.2,162.7 180.0,171.4 183.9,171.4 187.8,171.4 191.7,164.3 195.6,163.6 199.5,165.9 203.4,171.4 207.2,171.4 211.1,163.6 215.0,171.4 218.9,171.4 222.8,162.7 226.7,171.4 230.6,171.4 234.4,171.4 238.3,171.4 242.2,171.4 246.1,162.7 250.0,149.5 253.9,171.4 257.8,171.4 261.6,171.4 265.5,164.3 269.4,165.1 273.3,171.4 277.2,171.4 281.1,171.4 285.0,155.7 288.8,163.6 292.7,164.0 296.6,171.4 300.5,171.4 304.4,171.4 308.3,171.4 312.2,159.9 316.0,171.4 319.9,171.4 323.8,159.6 327.7,162.7"/><g fill="#cccccc"><circle cx="354.8" cy="190.3" r="1.65"/><circle cx="354.8" cy="193.6" r="1.65"/><circle cx="351.5" cy="193.6" r="1.65"/><circle cx="354.8" cy="196.9" r="1.65"/><circle cx="351.5" cy="196.9" r="1.65"/><circle cx="348.2" cy="196.9" r="1.65"/></g></svg></div>
<div class="abs panel" style="left:12px;top:411px"><div class="abs ptitle" style="text-align:left;left:157.0px;width:auto">prd</div><div class="abs" style="left:180px;top:8px;width:40px;height:17px;background:#c3c3c3"></div><svg class="abs" style="left:0;top:0;overflow:visible" width="355" height="198" viewBox="1 1 355 198"><g stroke="#f0f0f0" stroke-width="1" shape-rendering="crispEdges"><line x1="50.0" x2="330.8" y1="35.5" y2="35.5"/><line x1="50.0" x2="330.8" y1="69.5" y2="69.5"/><line x1="50.0" x2="330.8" y1="103.5" y2="103.5"/><line x1="50.0" x2="330.8" y1="137.5" y2="137.5"/><line x1="50.0" x2="330.8" y1="172.5" y2="172.5"/><line x1="94.5" x2="94.5" y1="35" y2="173"/><line x1="187.5" x2="187.5" y1="35" y2="173"/><line x1="281.5" x2="281.5" y1="35" y2="173"/></g><text x="44.0" y="40.0" text-anchor="end">80 ms</text><text x="44.0" y="74.0" text-anchor="end">60 ms</text><text x="44.0" y="108.0" text-anchor="end">40 ms</text><text x="44.0" y="142.0" text-anchor="end">20 ms</text><text x="44.0" y="177.0" text-anchor="end">0 µs</text><text x="93.7" y="190" text-anchor="middle">16:00</text><text x="186.8" y="190" text-anchor="middle">00:00</text><text x="280.9" y="190" text-anchor="middle">08:00</text><polyline fill="none" stroke="#7eb26d" stroke-width="2" stroke-linejoin="round" points="51.8,168.3 55.7,168.3 59.6,168.6 63.5,165.1 67.3,160.0 71.2,166.9 75.1,168.8 79.0,168.5 82.9,169.0 86.8,168.7 90.7,168.4 94.5,168.3 98.4,169.4 102.3,168.8 106.2,168.5 110.1,169.6 114.0,169.5 117.9,168.9 121.7,168.3 125.6,169.5 129.5,168.4 133.4,169.0 137.3,168.6 141.2,169.3 145.1,169.5 148.9,168.5 152.8,168.5 156.7,168.7 160.6,168.6 164.5,168.9 168.4,169.2 172.3,168.8 176.2,169.0 180.0,169.5 183.9,169.6 187.8,169.2 191.7,169.2 195.6,168.6 199.5,168.4 203.4,169.5 207.2,169.6 211.1,169.4 215.0,168.3 218.9,169.3 222.8,168.5 226.7,169.5 230.6,169.5 234.4,169.0 238.3,169.4 242.2,168.4 246.1,169.4 250.0,169.3 253.9,169.5 257.8,167.5 261.6,159.7 265.5,136.2 269.4,92.5 273.3,45.6 277.2,81.6 281.1,144.6 285.0,100.2 288.8,73.4 292.7,72.7 296.6,104.4 300.5,92.5 304.4,82.4 308.3,146.3 312.2,162.8 316.0,168.7 319.9,169.4 323.8,169.4 327.7,169.6"/><polyline fill="none" stroke="#eab839" stroke-width="2" stroke-linejoin="round" points="51.8,169.6 55.7,169.3 59.6,163.4 63.5,161.7 67.3,125.8 71.2,166.0 75.1,168.8 79.0,168.6 82.9,168.8 86.8,168.9 90.7,169.8 94.5,168.9 98.4,169.0 102.3,168.6 106.2,169.3 110.1,169.2 114.0,169.9 117.9,169.7 121.7,169.3 125.6,169.4 129.5,169.2 133.4,168.7 137.3,168.8 141.2,168.6 145.1,169.4 148.9,169.1 152.8,169.7 156.7,169.2 160.6,169.4 164.5,168.7 168.4,169.1 172.3,169.6 176.2,169.7 180.0,169.2 183.9,169.8 187.8,169.0 191.7,168.9 195.6,169.2 199.5,169.4 203.4,169.7 207.2,169.6 211.1,168.6 215.0,168.9 218.9,168.8 222.8,169.2 226.7,169.7 230.6,169.8 234.4,168.7 238.3,169.0 242.2,169.5 246.1,169.0 250.0,168.7 253.9,160.0 257.8,141.2 261.6,130.9 265.5,85.5 269.4,111.2 273.3,112.1 277.2,127.5 281.1,164.3 285.0,137.8 288.8,164.3 292.7,168.7 296.6,169.9 300.5,169.2 304.4,168.9 308.3,168.9 312.2,168.6 316.0,169.5 319.9,169.4 323.8,169.1 327.7,168.6"/><polyline fill="none" stroke="#6ed0e0" stroke-width="2" stroke-linejoin="round" points="51.8,168.5 55.7,169.4 59.6,163.4 63.5,105.2 67.3,137.8 71.2,166.9 75.1,169.2 79.0,169.3 82.9,168.9 86.8,167.9 90.7,168.9 94.5,168.4 98.4,169.0 102.3,168.8 106.2,169.1 110.1,169.3 114.0,167.8 117.9,167.9 121.7,167.8 125.6,168.1 129.5,169.1 133.4,168.8 137.3,167.9 141.2,168.2 145.1,168.3 148.9,168.7 152.8,168.4 156.7,168.7 160.6,169.3 164.5,169.0 168.4,167.7 172.3,167.8 176.2,168.0 180.0,167.8 183.9,169.1 187.8,169.3 191.7,169.1 195.6,168.7 199.5,167.9 203.4,168.9 207.2,168.6 211.1,168.2 215.0,168.4 218.9,168.8 222.8,169.0 226.7,169.0 230.6,169.3 234.4,168.9 238.3,168.9 242.2,168.2 246.1,169.0 250.0,150.6 253.9,165.1 257.8,169.4 261.6,169.4 265.5,168.7 269.4,168.0 273.3,161.7 277.2,151.5 281.1,162.8 285.0,108.6 288.8,159.7 292.7,168.2 296.6,168.6 300.5,154.9 304.4,162.8 308.3,168.0 312.2,169.1 316.0,135.4 319.9,159.7 323.8,169.3 327.7,167.8"/><polyline fill="none" stroke="#ef843c" stroke-width="2" stroke-linejoin="round" points="51.8,169.0 55.7,169.4 59.6,168.9 63.5,169.2 67.3,170.0 71.2,168.8 75.1,169.5 79.0,169.8 82.9,169.1 86.8,168.8 90.7,169.3 94.5,169.6 98.4,168.9 102.3,169.1 106.2,168.8 110.1,169.2 114.0,168.8 117.9,169.3 121.7,169.5 125.6,169.9 129.5,168.9 133.4,169.0 137.3,168.8 141.2,169.5 145.1,168.8 148.9,169.8 152.8,170.1 156.7,169.6 160.6,169.0 164.5,169.3 168.4,169.6 172.3,169.3 176.2,169.4 180.0,169.5 183.9,169.7 187.8,169.5 191.7,169.3 195.6,169.7 199.5,169.6 203.4,169.6 207.2,169.1 211.1,169.4 215.0,169.5 218.9,168.8 222.8,170.1 226.7,169.7 230.6,170.0 234.4,169.1 238.3,168.9 242.2,169.9 246.1,169.0 250.0,169.9 253.9,169.0 257.8,169.4 261.6,169.6 265.5,169.4 269.4,170.0 273.3,169.9 277.2,169.3 281.1,125.8 285.0,158.3 288.8,169.8 292.7,169.5 296.6,168.9 300.5,169.5 304.4,169.0 308.3,168.8 312.2,166.9 316.0,125.8 319.9,109.5 323.8,114.6 327.7,115.5"/><polyline fill="none" stroke="#e24d42" stroke-width="2" stroke-linejoin="round" points="51.8,168.7 55.7,168.8 59.6,168.4 63.5,167.8 67.3,167.4 71.2,168.6 75.1,167.6 79.0,168.3 82.9,168.6 86.8,168.7 90.7,167.5 94.5,168.6 98.4,168.2 102.3,168.7 106.2,167.8 110.1,168.6 114.0,167.4 117.9,158.3 121.7,151.5 125.6,149.7 129.5,148.0 133.4,146.3 137.3,154.9 141.2,160.0 145.1,163.4 148.9,154.9 152.8,123.0 156.7,129.2 160.6,139.5 164.5,153.3 168.4,145.6 172.3,137.8 176.2,144.1 180.0,159.7 183.9,165.1 187.8,166.6 191.7,167.0 195.6,167.4 199.5,166.4 203.4,164.5 207.2,164.4 211.1,166.5 215.0,166.5 218.9,166.7 222.8,163.5 226.7,165.2 230.6,166.9 234.4,166.8 238.3,167.2 242.2,167.0 246.1,167.0 250.0,163.9 253.9,166.7 257.8,166.4 261.6,165.2 265.5,166.0 269.4,164.9 273.3,166.6 277.2,165.9 281.1,167.3 285.0,163.7 288.8,166.4 292.7,166.7 296.6,165.4 300.5,164.7 304.4,165.1 308.3,167.6 312.2,167.3 316.0,167.8 319.9,166.6 323.8,167.0 327.7,166.6"/><polyline fill="none" stroke="#1f78c1" stroke-width="2" stroke-linejoin="round" points="51.8,168.5 55.7,168.2 59.6,168.0 63.5,168.2 67.3,168.1 71.2,168.5 75.1,169.1 79.0,168.4 82.9,168.1 86.8,168.8 90.7,169.1 94.5,169.2 98.4,169.2 102.3,168.4 106.2,168.6 110.1,168.0 114.0,167.8 117.9,156.6 121.7,148.0 125.6,137.8 129.5,137.8 133.4,133.1 137.3,141.2 141.2,147.2 145.1,158.3 148.9,154.9 152.8,129.2 156.7,137.8 160.6,139.5 164.5,154.9 168.4,158.3 172.3,151.5 176.2,158.3 180.0,163.4 183.9,167.6 187.8,167.9 191.7,166.7 195.6,168.0 199.5,167.6 203.4,164.9 207.2,166.2 211.1,167.3 215.0,167.2 218.9,167.8 222.8,164.6 226.7,165.6 230.6,167.3 234.4,166.5 238.3,168.2 242.2,168.3 246.1,166.4 250.0,165.1 253.9,167.2 257.8,165.9 261.6,166.8 265.5,166.3 269.4,165.1 273.3,166.8 277.2,166.8 281.1,167.2 285.0,164.8 288.8,167.5 292.7,167.5 296.6,165.2 300.5,165.3 304.4,165.5 308.3,167.8 312.2,167.2 316.0,167.1 319.9,166.6 323.8,166.6 327.7,167.0"/><polyline fill="none" stroke="#ba43a9" stroke-width="2" stroke-linejoin="round" points="51.8,167.4 55.7,168.4 59.6,168.5 63.5,167.7 67.3,168.0 71.2,167.6 75.1,168.0 79.0,167.6 82.9,168.5 86.8,168.1 90.7,168.1 94.5,167.2 98.4,167.6 102.3,167.2 106.2,168.5 110.1,168.2 114.0,167.3 117.9,151.8 121.7,139.5 125.6,136.2 129.5,131.2 133.4,130.0 137.3,137.8 141.2,144.1 145.1,159.7 148.9,163.4 152.8,151.5 156.7,156.6 160.6,160.0 164.5,163.4 168.4,167.0 172.3,166.6 176.2,166.6 180.0,166.3 183.9,166.8 187.8,166.6 191.7,165.1 195.6,165.8 199.5,166.1 203.4,163.7 207.2,164.8 211.1,165.1 215.0,166.6 218.9,166.0 222.8,163.9 226.7,164.4 230.6,166.5 234.4,166.7 238.3,166.6 242.2,166.9 246.1,166.5 250.0,164.6 253.9,166.6 257.8,165.8 261.6,165.3 265.5,165.3 269.4,163.7 273.3,165.7 277.2,164.7 281.1,166.1 285.0,164.1 288.8,165.8 292.7,165.4 296.6,165.2 300.5,164.3 304.4,164.5 308.3,166.9 312.2,166.2 316.0,167.0 319.9,165.3 323.8,165.0 327.7,166.3"/><polyline fill="none" stroke="#705da0" stroke-width="2" stroke-linejoin="round" points="51.8,168.3 55.7,167.2 59.6,167.6 63.5,167.4 67.3,168.1 71.2,166.9 75.1,167.2 79.0,167.1 82.9,167.5 86.8,167.6 90.7,167.4 94.5,167.3 98.4,168.0 102.3,167.9 106.2,167.0 110.1,167.0 114.0,167.1 117.9,154.9 121.7,138.6 125.6,141.7 129.5,139.5 133.4,136.0 137.3,146.3 141.2,154.9 145.1,161.7 148.9,160.0 152.8,142.9 156.7,149.7 160.6,148.0 164.5,158.3 168.4,148.7 172.3,142.9 176.2,153.3 180.0,163.4 183.9,166.3 187.8,167.3 191.7,165.7 195.6,165.7 199.5,166.6 203.4,163.0 207.2,163.9 211.1,165.1 215.0,164.8 218.9,162.8 222.8,148.7 226.7,156.6 230.6,163.4 234.4,165.5 238.3,166.9 242.2,165.8 246.1,162.8 250.0,151.1 253.9,164.3 257.8,164.4 261.6,164.2 265.5,164.7 269.4,162.8 273.3,165.1 277.2,164.7 281.1,165.3 285.0,162.4 288.8,166.2 292.7,165.4 296.6,163.9 300.5,163.8 304.4,164.0 308.3,166.4 312.2,167.3 316.0,167.3 319.9,166.1 323.8,165.5 327.7,166.0"/><polyline fill="none" stroke="#508642" stroke-width="2" stroke-linejoin="round" points="51.8,168.1 55.7,168.3 59.6,167.2 63.5,167.8 67.3,167.0 71.2,168.5 75.1,167.0 79.0,167.2 82.9,167.0 86.8,167.7 90.7,167.3 94.5,167.9 98.4,167.3 102.3,167.6 106.2,167.7 110.1,168.1 114.0,167.4 117.9,158.3 121.7,149.7 125.6,148.0 129.5,142.9 133.4,137.8 137.3,151.5 141.2,160.0 145.1,163.4 148.9,158.3 152.8,130.0 156.7,144.6 160.6,152.3 164.5,154.9 168.4,151.5 172.3,132.6 176.2,161.7 180.0,165.1 183.9,166.5 187.8,166.9 191.7,165.4 195.6,166.3 199.5,166.1 203.4,163.3 207.2,158.1 211.1,161.2 215.0,165.4 218.9,165.7 222.8,163.1 226.7,164.2 230.6,166.5 234.4,165.2 238.3,166.3 242.2,167.1 246.1,166.3 250.0,164.1 253.9,166.9 257.8,165.7 261.6,165.8 265.5,166.7 269.4,164.7 273.3,165.3 277.2,165.6 281.1,166.9 285.0,163.4 288.8,165.7 292.7,166.2 296.6,165.4 300.5,164.4 304.4,164.4 308.3,166.6 312.2,167.2 316.0,166.5 319.9,166.0 323.8,165.1 327.7,166.4"/><polyline fill="none" stroke="#cca300" stroke-width="2" stroke-linejoin="round" points="51.8,167.9 55.7,167.7 59.6,168.5 63.5,168.1 67.3,167.7 71.2,168.4 75.1,168.5 79.0,167.2 82.9,167.7 86.8,153.3 90.7,153.3 94.5,167.7 98.4,168.3 102.3,168.9 106.2,168.5 110.1,167.4 114.0,167.8 117.9,156.6 121.7,150.3 125.6,141.2 129.5,145.6 133.4,144.8 137.3,153.3 141.2,156.6 145.1,159.7 148.9,161.2 152.8,144.1 156.7,144.1 160.6,153.3 164.5,158.3 168.4,160.0 172.3,151.5 176.2,160.0 180.0,162.8 183.9,166.7 187.8,166.6 191.7,166.8 195.6,166.9 199.5,167.3 203.4,163.7 207.2,165.9 211.1,166.6 215.0,166.1 218.9,165.1 222.8,156.6 226.7,163.4 230.6,161.7 234.4,154.9 238.3,160.0 242.2,165.1 246.1,167.4 250.0,165.3 253.9,167.4 257.8,165.2 261.6,165.6 265.5,160.0 269.4,151.5 273.3,158.3 277.2,163.4 281.1,166.8 285.0,164.5 288.8,166.8 292.7,167.0 296.6,165.2 300.5,165.1 304.4,166.5 308.3,166.8 312.2,167.2 316.0,167.4 319.9,165.9 323.8,166.4 327.7,166.8"/><polyline fill="none" stroke="#447ebc" stroke-width="2" stroke-linejoin="round" points="51.8,167.1 55.7,168.2 59.6,167.6 63.5,167.9 67.3,167.9 71.2,167.7 75.1,167.7 79.0,168.4 82.9,167.2 86.8,167.3 90.7,168.1 94.5,168.6 98.4,167.0 102.3,168.0 106.2,167.0 110.1,167.9 114.0,167.6 117.9,160.0 121.7,153.2 125.6,149.7 129.5,151.5 133.4,149.7 137.3,156.6 141.2,160.0 145.1,161.7 148.9,160.0 152.8,148.0 156.7,151.5 160.6,154.9 164.5,160.0 168.4,160.0 172.3,156.6 176.2,161.7 180.0,165.1 183.9,166.2 187.8,167.3 191.7,165.6 195.6,166.7 199.5,166.1 203.4,164.7 207.2,165.0 211.1,166.5 215.0,165.9 218.9,167.1 222.8,164.0 226.7,163.9 230.6,166.4 234.4,165.5 238.3,166.0 242.2,167.4 246.1,166.1 250.0,163.6 253.9,167.2 257.8,165.6 261.6,164.5 265.5,166.3 269.4,164.0 273.3,166.6 277.2,164.8 281.1,166.0 285.0,162.7 288.8,167.2 292.7,165.3 296.6,163.9 300.5,164.6 304.4,166.0 308.3,166.2 312.2,166.5 316.0,167.7 319.9,165.0 323.8,165.1 327.7,166.5"/><polyline fill="none" stroke="#c15c17" stroke-width="2" stroke-linejoin="round" points="51.8,168.8 55.7,168.0 59.6,167.7 63.5,168.5 67.3,168.7 71.2,168.0 75.1,167.9 79.0,168.7 82.9,168.7 86.8,167.8 90.7,168.3 94.5,167.9 98.4,168.3 102.3,168.0 106.2,168.1 110.1,167.7 114.0,168.2 117.9,148.0 121.7,145.6 125.6,146.3 129.5,146.3 133.4,144.8 137.3,154.9 141.2,162.8 145.1,165.1 148.9,163.4 152.8,158.3 156.7,160.0 160.6,163.4 164.5,164.3 168.4,161.7 172.3,160.0 176.2,163.4 180.0,168.1 183.9,166.9 187.8,167.3 191.7,167.3 195.6,167.6 199.5,167.6 203.4,165.5 207.2,165.6 211.1,166.1 215.0,166.9 218.9,166.9 222.8,164.0 226.7,166.3 230.6,167.1 234.4,167.2 238.3,167.4 242.2,167.4 246.1,167.5 250.0,165.2 253.9,167.9 257.8,165.7 261.6,166.4 265.5,166.9 269.4,164.8 273.3,167.1 277.2,166.2 281.1,166.5 285.0,164.4 288.8,167.0 292.7,166.5 296.6,165.9 300.5,165.6 304.4,166.7 308.3,166.9 312.2,168.4 316.0,167.3 319.9,167.0 323.8,166.8 327.7,167.3"/><polyline fill="none" stroke="#890f02" stroke-width="2" stroke-linejoin="round" points="51.8,168.7 55.7,168.9 59.6,168.8 63.5,164.3 67.3,163.4 71.2,168.0 75.1,169.1 79.0,168.8 82.9,168.4 86.8,169.3 90.7,168.2 94.5,168.4 98.4,169.2 102.3,169.1 106.2,168.7 110.1,168.6 114.0,168.6 117.9,153.3 121.7,146.8 125.6,148.7 129.5,151.1 133.4,147.2 137.3,159.7 141.2,166.0 145.1,165.1 148.9,163.4 152.8,156.6 156.7,158.3 160.6,161.2 164.5,158.1 168.4,157.3 172.3,158.3 176.2,154.9 180.0,156.6 183.9,164.3 187.8,164.3 191.7,165.1 195.6,168.2 199.5,167.3 203.4,165.9 207.2,165.8 211.1,166.8 215.0,167.5 218.9,167.9 222.8,152.6 226.7,156.6 230.6,164.3 234.4,167.0 238.3,168.3 242.2,167.1 246.1,167.1 250.0,166.3 253.9,168.4 257.8,166.8 261.6,166.4 265.5,167.2 269.4,165.0 273.3,167.4 277.2,167.0 281.1,167.9 285.0,165.4 288.8,168.0 292.7,167.3 296.6,165.8 300.5,166.2 304.4,167.1 308.3,167.1 312.2,168.4 316.0,168.2 319.9,167.0 323.8,166.6 327.7,167.6"/><polyline fill="none" stroke="#0a437c" stroke-width="2" stroke-linejoin="round" points="51.8,166.5 55.7,166.3 59.6,166.5 63.5,167.3 67.3,166.5 71.2,167.4 75.1,167.0 79.0,167.0 82.9,167.6 86.8,167.6 90.7,167.7 94.5,167.0 98.4,166.6 102.3,166.9 106.2,167.6 110.1,167.7 114.0,166.9 117.9,165.7 121.7,162.8 125.6,165.1 129.5,163.4 133.4,155.7 137.3,154.9 141.2,155.7 145.1,160.0 148.9,163.4 152.8,154.9 156.7,156.6 160.6,158.3 164.5,164.3 168.4,159.7 172.3,154.2 176.2,161.2 180.0,166.0 183.9,167.7 187.8,163.4 191.7,163.9 195.6,164.6 199.5,165.9 203.4,162.6 207.2,162.3 211.1,164.7 215.0,165.5 218.9,164.7 222.8,161.9 226.7,163.7 230.6,165.2 234.4,163.8 238.3,165.4 242.2,165.8 246.1,165.5 250.0,162.1 253.9,164.9 257.8,163.2 261.6,163.0 265.5,164.6 269.4,158.3 273.3,164.8 277.2,163.1 281.1,165.4 285.0,158.3 288.8,165.0 292.7,165.2 296.6,163.7 300.5,163.2 304.4,164.4 308.3,164.7 312.2,166.2 316.0,166.8 319.9,164.0 323.8,164.9 327.7,165.5"/><polyline fill="none" stroke="#6d1f62" stroke-width="2" stroke-linejoin="round" points="51.8,168.8 55.7,168.3 59.6,168.7 63.5,164.3 67.3,162.8 71.2,168.2 75.1,167.6 79.0,167.9 82.9,167.9 86.8,168.5 90.7,168.4 94.5,168.4 98.4,168.5 102.3,167.4 106.2,167.5 110.1,167.9 114.0,168.1 117.9,163.8 121.7,163.4 125.6,166.0 129.5,165.1 133.4,162.8 137.3,159.7 141.2,164.3 145.1,163.4 148.9,163.4 152.8,161.2 156.7,162.8 160.6,163.4 164.5,160.5 168.4,163.4 172.3,161.2 176.2,163.4 180.0,166.0 183.9,163.4 187.8,160.5 191.7,162.8 195.6,162.3 199.5,159.2 203.4,160.0 207.2,160.2 211.1,162.1 215.0,161.1 218.9,162.8 222.8,160.9 226.7,160.1 230.6,162.3 234.4,161.9 238.3,163.7 242.2,162.7 246.1,162.0 250.0,161.7 253.9,162.6 257.8,160.8 261.6,161.0 265.5,161.6 269.4,159.2 273.3,161.7 277.2,160.4 281.1,162.3 285.0,159.2 288.8,163.2 292.7,161.0 296.6,160.0 300.5,159.2 304.4,161.2 308.3,161.9 312.2,163.6 316.0,163.4 319.9,162.4 323.8,161.2 327.7,163.3"/><g fill="#cccccc"><circle cx="354.8" cy="190.3" r="1.65"/><circle cx="354.8" cy="193.6" r="1.65"/><circle cx="351.5" cy="193.6" r="1.65"/><circle cx="354.8" cy="196.9" r="1.65"/><circle cx="351.5" cy="196.9" r="1.65"/><circle cx="348.2" cy="196.9" r="1.65"/></g></svg></div>
<div class="abs panel" style="left:381px;top:411px"><div class="abs ptitle">prd2</div><svg class="abs" style="left:0;top:0;overflow:visible" width="355" height="198" viewBox="1 1 355 198"><g stroke="#f0f0f0" stroke-width="1" shape-rendering="crispEdges"><line x1="50.0" x2="330.6" y1="35.5" y2="35.5"/><line x1="50.0" x2="330.6" y1="69.5" y2="69.5"/><line x1="50.0" x2="330.6" y1="103.5" y2="103.5"/><line x1="50.0" x2="330.6" y1="137.5" y2="137.5"/><line x1="50.0" x2="330.6" y1="172.5" y2="172.5"/><line x1="94.5" x2="94.5" y1="35" y2="173"/><line x1="187.5" x2="187.5" y1="35" y2="173"/><line x1="281.5" x2="281.5" y1="35" y2="173"/></g><text x="44.0" y="40.0" text-anchor="end">40 ms</text><text x="44.0" y="74.0" text-anchor="end">30 ms</text><text x="44.0" y="108.0" text-anchor="end">20 ms</text><text x="44.0" y="142.0" text-anchor="end">10 ms</text><text x="44.0" y="177.0" text-anchor="end">0 µs</text><text x="94.1" y="190" text-anchor="middle">16:00</text><text x="187.0" y="190" text-anchor="middle">00:00</text><text x="281.0" y="190" text-anchor="middle">08:00</text><polyline fill="none" stroke="#7eb26d" stroke-width="2" stroke-linejoin="round" points="51.8,164.5 55.7,166.7 59.6,167.5 63.5,160.4 67.3,159.7 71.2,167.5 75.1,167.9 79.0,167.5 82.9,167.9 86.8,167.9 90.7,167.9 94.5,167.9 98.4,167.9 102.3,167.9 106.2,166.7 110.1,165.8 114.0,165.1 117.9,163.4 121.7,154.9 125.6,154.5 129.5,146.3 133.4,125.1 137.3,110.4 141.2,103.5 145.1,133.0 149.0,127.5 152.8,48.7 156.7,60.3 160.6,82.9 164.5,129.9 168.4,112.1 172.3,145.6 176.2,155.9 180.0,158.0 183.9,158.6 187.8,159.3 191.7,162.8 195.6,165.1 199.5,162.8 203.4,164.3 207.2,164.6 211.1,163.4 215.0,160.9 218.9,156.2 222.8,159.3 226.7,158.3 230.6,156.2 234.4,158.3 238.3,154.9 242.2,155.7 246.1,158.8 250.0,160.9 253.9,161.2 257.8,164.6 261.6,154.9 265.5,151.1 269.4,150.3 273.3,150.3 277.2,148.7 281.1,164.5 285.0,158.1 288.8,162.8 292.7,162.8 296.6,158.8 300.5,165.5 304.4,165.8 308.3,166.7 312.2,167.5 316.0,165.8 319.9,164.3 323.8,167.5 327.7,168.2"/><polyline fill="none" stroke="#eab839" stroke-width="2" stroke-linejoin="round" points="51.8,159.3 55.7,162.8 59.6,163.4 63.5,156.9 67.3,153.8 71.2,164.5 75.1,165.5 79.0,163.4 82.9,164.8 86.8,164.5 90.7,162.1 94.5,164.8 98.4,160.4 102.3,162.8 106.2,162.8 110.1,162.8 114.0,163.4 117.9,112.7 121.7,92.5 125.6,78.2 129.5,71.3 133.4,51.1 137.3,79.9 141.2,93.9 145.1,131.6 149.0,141.5 152.8,139.5 156.7,136.0 160.6,148.7 164.5,125.1 168.4,97.0 172.3,76.8 176.2,90.1 180.0,136.0 183.9,154.2 187.8,145.6 191.7,146.3 195.6,150.6 199.5,147.2 203.4,146.8 207.2,141.7 211.1,161.2 215.0,165.1 218.9,165.5 222.8,141.2 226.7,150.3 230.6,155.7 234.4,154.9 238.3,158.1 242.2,165.5 246.1,160.4 250.0,159.7 253.9,159.7 257.8,151.8 261.6,152.3 265.5,148.7 269.4,144.8 273.3,151.8 277.2,150.3 281.1,159.7 285.0,146.3 288.8,159.7 292.7,157.8 296.6,156.9 300.5,152.3 304.4,160.4 308.3,163.1 312.2,163.4 316.0,160.9 319.9,160.9 323.8,162.1 327.7,163.1"/><polyline fill="none" stroke="#6ed0e0" stroke-width="2" stroke-linejoin="round" points="51.8,165.1 55.7,167.2 59.6,167.9 63.5,162.8 67.3,160.4 71.2,167.9 75.1,168.2 79.0,168.2 82.9,168.2 86.8,168.2 90.7,168.2 94.5,168.2 98.4,168.2 102.3,168.2 106.2,168.2 110.1,168.2 114.0,167.9 117.9,167.5 121.7,165.8 125.6,163.4 129.5,159.7 133.4,151.1 137.3,129.5 141.2,139.5 145.1,150.1 149.0,143.9 152.8,109.7 156.7,115.1 160.6,131.6 164.5,148.0 168.4,144.9 172.3,131.6 176.2,150.4 180.0,162.8 183.9,167.5 187.8,165.8 191.7,167.7 195.6,168.2 199.5,162.1 203.4,167.2 207.2,166.7 211.1,165.8 215.0,167.2 218.9,167.7 222.8,168.1 226.7,168.1 230.6,168.1 234.4,168.1 238.3,168.1 242.2,167.5 246.1,168.2 250.0,167.5 253.9,167.2 257.8,162.8 261.6,161.2 265.5,156.9 269.4,153.7 273.3,159.7 277.2,158.1 281.1,165.1 285.0,156.2 288.8,165.8 292.7,164.6 296.6,160.4 300.5,160.9 304.4,163.4 308.3,165.5 312.2,167.2 316.0,166.7 319.9,167.5 323.8,167.7 327.7,167.9"/><polyline fill="none" stroke="#ef843c" stroke-width="2" stroke-linejoin="round" points="51.8,168.7 55.7,169.1 59.6,169.6 63.5,168.2 67.3,167.9 71.2,169.8 75.1,169.8 79.0,169.8 82.9,169.8 86.8,169.8 90.7,169.8 94.5,169.8 98.4,169.8 102.3,169.8 106.2,169.1 110.1,170.3 114.0,167.5 117.9,165.5 121.7,165.8 125.6,168.7 129.5,167.5 133.4,164.1 137.3,155.7 141.2,154.7 145.1,162.1 149.0,159.3 152.8,141.5 156.7,145.6 160.6,150.4 164.5,155.9 168.4,159.0 172.3,151.8 176.2,159.7 180.0,161.0 183.9,169.8 187.8,168.2 191.7,169.8 195.6,170.3 199.5,164.6 203.4,168.2 207.2,169.1 211.1,167.7 215.0,169.4 218.9,169.4 222.8,169.1 226.7,169.3 230.6,169.4 234.4,168.7 238.3,169.4 242.2,169.8 246.1,168.2 250.0,167.2 253.9,165.1 257.8,158.8 261.6,164.3 265.5,168.7 269.4,167.2 273.3,168.2 277.2,166.7 281.1,167.5 285.0,166.9 288.8,168.1 292.7,167.7 296.6,167.5 300.5,167.7 304.4,168.4 308.3,169.3 312.2,169.8 316.0,169.4 319.9,169.3 323.8,169.9 327.7,170.3"/><g fill="#cccccc"><circle cx="354.8" cy="190.3" r="1.65"/><circle cx="354.8" cy="193.6" r="1.65"/><circle cx="351.5" cy="193.6" r="1.65"/><circle cx="354.8" cy="196.9" r="1.65"/><circle cx="351.5" cy="196.9" r="1.65"/><circle cx="348.2" cy="196.9" r="1.65"/></g></svg></div>
<div class="abs panel" style="left:749px;top:411px"><div class="abs ptitle">preprod</div><svg class="abs" style="left:0;top:0;overflow:visible" width="355" height="198" viewBox="1 1 355 198"><g stroke="#f0f0f0" stroke-width="1" shape-rendering="crispEdges"><line x1="56.4" x2="330.6" y1="35.5" y2="35.5"/><line x1="56.4" x2="330.6" y1="69.5" y2="69.5"/><line x1="56.4" x2="330.6" y1="103.5" y2="103.5"/><line x1="56.4" x2="330.6" y1="137.5" y2="137.5"/><line x1="56.4" x2="330.6" y1="172.5" y2="172.5"/><line x1="99.5" x2="99.5" y1="35" y2="173"/><line x1="190.5" x2="190.5" y1="35" y2="173"/><line x1="282.5" x2="282.5" y1="35" y2="173"/></g><text x="50.4" y="40.0" text-anchor="end">1.00 µs</text><text x="50.4" y="74.0" text-anchor="end">0.75 µs</text><text x="50.4" y="108.0" text-anchor="end">0.50 µs</text><text x="50.4" y="142.0" text-anchor="end">0.25 µs</text><text x="50.4" y="177.0" text-anchor="end">0 µs</text><text x="98.9" y="190" text-anchor="middle">16:00</text><text x="189.9" y="190" text-anchor="middle">00:00</text><text x="281.8" y="190" text-anchor="middle">08:00</text><polyline fill="none" stroke="#7eb26d" stroke-width="2" stroke-linejoin="round" points="57.7,172.0 77.0,172.0"/><g fill="#cccccc"><circle cx="354.8" cy="190.3" r="1.65"/><circle cx="354.8" cy="193.6" r="1.65"/><circle cx="351.5" cy="193.6" r="1.65"/><circle cx="354.8" cy="196.9" r="1.65"/><circle cx="351.5" cy="196.9" r="1.65"/><circle cx="348.2" cy="196.9" r="1.65"/></g></svg></div>
<div class="abs panel" style="left:1118px;top:411px"><div class="abs ptitle">resto</div><svg class="abs" style="left:0;top:0;overflow:visible" width="355" height="198" viewBox="1 1 355 198"><g stroke="#f0f0f0" stroke-width="1" shape-rendering="crispEdges"><line x1="50.0" x2="330.7" y1="35.5" y2="35.5"/><line x1="50.0" x2="330.7" y1="62.5" y2="62.5"/><line x1="50.0" x2="330.7" y1="89.5" y2="89.5"/><line x1="50.0" x2="330.7" y1="117.5" y2="117.5"/><line x1="50.0" x2="330.7" y1="144.5" y2="144.5"/><line x1="50.0" x2="330.7" y1="172.5" y2="172.5"/><line x1="94.5" x2="94.5" y1="35" y2="173"/><line x1="187.5" x2="187.5" y1="35" y2="173"/><line x1="281.5" x2="281.5" y1="35" y2="173"/></g><text x="44.0" y="40.0" text-anchor="end">13 ms</text><text x="44.0" y="67.0" text-anchor="end">10 ms</text><text x="44.0" y="94.0" text-anchor="end">8 ms</text><text x="44.0" y="122.0" text-anchor="end">5 ms</text><text x="44.0" y="149.0" text-anchor="end">3 ms</text><text x="44.0" y="177.0" text-anchor="end">0 µs</text><text x="94.0" y="190" text-anchor="middle">16:00</text><text x="187.1" y="190" text-anchor="middle">00:00</text><text x="280.7" y="190" text-anchor="middle">08:00</text><polyline fill="none" stroke="#7eb26d" stroke-width="2" stroke-linejoin="round" points="51.8,144.6 55.7,155.0 59.6,147.3 63.5,146.2 67.3,116.7 71.2,166.0 75.1,171.5 79.0,166.5 82.9,166.0 86.8,164.3 90.7,166.0 94.5,162.1 98.4,160.5 102.3,172.0 106.2,161.0 110.1,153.4 114.0,162.1 117.9,144.6 121.7,155.0 125.6,168.2 129.5,168.7 133.4,166.0 137.3,163.6 141.2,171.5 145.1,166.0 149.0,161.0 152.8,162.7 156.7,163.6 160.6,168.2 164.5,160.5 168.4,168.7 172.3,161.0 176.2,160.5 180.0,155.6 183.9,164.3 187.8,161.0 191.7,163.6 195.6,150.1 199.5,158.8 203.4,165.6 207.2,154.2 211.1,168.7 215.0,161.0 218.9,163.6 222.8,164.0 226.7,164.3 230.6,161.0 234.4,151.2 238.3,159.9 242.2,163.6 246.1,130.0 250.0,77.7 253.9,130.4 257.8,147.2 261.6,155.0 265.5,128.2 269.4,145.7 273.3,172.0 277.2,139.3 281.1,169.0 285.0,150.1 288.8,145.7 292.7,166.7 296.6,128.2 300.5,166.0 304.4,158.1 308.3,160.5 312.2,166.0 316.0,150.1 319.9,166.0 323.8,167.6 327.7,167.2"/><polyline fill="none" stroke="#eab839" stroke-width="2" stroke-linejoin="round" points="51.8,133.6 55.7,162.7 59.6,162.7 63.5,136.4 67.3,133.6 71.2,168.2 75.1,169.0 79.0,166.0 82.9,164.3 86.8,166.2 90.7,168.7 94.5,158.8 98.4,166.0 102.3,155.6 106.2,172.0 110.1,138.6 114.0,159.9 117.9,144.6 121.7,151.7 125.6,163.6 129.5,161.0 133.4,171.5 137.3,168.2 141.2,163.6 145.1,168.2 149.0,164.0 152.8,163.6 156.7,163.6 160.6,166.0 164.5,158.1 168.4,166.5 172.3,166.0 176.2,161.0 180.0,160.5 183.9,166.0 187.8,130.9 191.7,159.4 195.6,164.0 199.5,159.7 203.4,166.2 207.2,161.0 211.1,167.6 215.0,163.6 218.9,168.7 222.8,164.0 226.7,168.7 230.6,163.6 234.4,114.5 238.3,164.0 242.2,139.1 246.1,117.5 250.0,61.9 253.9,123.8 257.8,161.0 261.6,92.5 265.5,135.5 269.4,133.6 273.3,158.1 277.2,122.7 281.1,163.6 285.0,92.5 288.8,130.0 292.7,155.0 296.6,146.5 300.5,141.8 304.4,172.0 308.3,161.0 312.2,168.7 316.0,166.7 319.9,166.7 323.8,169.0 327.7,166.7"/><polyline fill="none" stroke="#6ed0e0" stroke-width="2" stroke-linejoin="round" points="51.8,162.1 55.7,164.0 59.6,164.0 63.5,154.7 67.3,155.6 71.2,165.6 75.1,165.6 79.0,163.6 82.9,164.7 86.8,163.6 90.7,162.1 94.5,163.6 98.4,161.0 102.3,161.0 106.2,161.7 110.1,161.7 114.0,162.8 117.9,115.0 121.7,106.6 125.6,112.0 129.5,117.2 133.4,105.5 137.3,133.6 141.2,141.0 145.1,150.7 149.0,145.3 152.8,110.1 156.7,109.5 160.6,122.1 164.5,135.5 168.4,138.0 172.3,133.1 176.2,122.7 180.0,153.4 183.9,157.3 187.8,147.9 191.7,157.3 195.6,157.8 199.5,150.1 203.4,151.5 207.2,151.5 211.1,155.8 215.0,154.7 218.9,154.2 222.8,125.0 226.7,134.7 230.6,147.4 234.4,146.9 238.3,153.4 242.2,156.9 246.1,148.4 250.0,141.3 253.9,161.0 257.8,143.7 261.6,151.2 265.5,150.1 269.4,142.4 273.3,150.6 277.2,144.8 281.1,157.3 285.0,141.3 288.8,150.6 292.7,148.8 296.6,135.0 300.5,132.3 304.4,136.9 308.3,149.5 312.2,155.8 316.0,155.8 319.9,153.4 323.8,162.8 327.7,164.7"/><g fill="#cccccc"><circle cx="354.8" cy="190.3" r="1.65"/><circle cx="354.8" cy="193.6" r="1.65"/><circle cx="351.5" cy="193.6" r="1.65"/><circle cx="354.8" cy="196.9" r="1.65"/><circle cx="351.5" cy="196.9" r="1.65"/><circle cx="348.2" cy="196.9" r="1.65"/></g></svg></div>
<div class="abs panel" style="left:12px;top:622px"><div class="abs" style="left:159px;top:8px;width:40px;height:16px;background:#c3c3c3"></div><svg class="abs" style="left:0;top:0;overflow:visible" width="355" height="198" viewBox="1 1 355 198"><g stroke="#f0f0f0" stroke-width="1" shape-rendering="crispEdges"><line x1="50.0" x2="330.8" y1="35.5" y2="35.5"/><line x1="50.0" x2="330.8" y1="80.5" y2="80.5"/><line x1="50.0" x2="330.8" y1="126.5" y2="126.5"/><line x1="50.0" x2="330.8" y1="172.5" y2="172.5"/><line x1="94.5" x2="94.5" y1="35" y2="173"/><line x1="187.5" x2="187.5" y1="35" y2="173"/><line x1="281.5" x2="281.5" y1="35" y2="173"/></g><text x="44.0" y="40.0" text-anchor="end">15 ms</text><text x="44.0" y="85.0" text-anchor="end">10 ms</text><text x="44.0" y="131.0" text-anchor="end">5 ms</text><text x="44.0" y="177.0" text-anchor="end">0 µs</text><text x="93.7" y="190" text-anchor="middle">16:00</text><text x="186.8" y="190" text-anchor="middle">00:00</text><text x="280.9" y="190" text-anchor="middle">08:00</text><polyline fill="none" stroke="#7eb26d" stroke-width="2" stroke-linejoin="round" points="51.8,162.0 55.7,162.0 59.6,161.0 63.5,162.0 67.3,163.1 71.2,160.5 75.1,160.8 79.0,160.5 82.9,160.5 86.8,162.9 90.7,161.0 94.5,161.7 98.4,162.0 102.3,158.8 106.2,161.5 110.1,163.1 114.0,160.5 117.9,158.1 121.7,159.4 125.6,149.2 129.5,155.7 133.4,162.0 137.3,158.8 141.2,162.5 145.1,162.9 148.9,162.5 152.8,161.0 156.7,163.1 160.6,162.9 164.5,161.2 168.4,162.9 172.3,58.2 176.2,158.1 180.0,164.1 183.9,160.5 187.8,161.5 191.7,160.5 195.6,162.9 199.5,161.2 203.4,160.5 207.2,158.8 211.1,119.9 215.0,161.2 218.9,163.6 222.8,162.5 226.7,160.1 230.6,162.9 234.4,162.5 238.3,161.0 242.2,162.5 246.1,160.5 250.0,160.1 253.9,161.2 257.8,160.1 261.6,161.0 265.5,161.0 269.4,160.1 273.3,160.8 277.2,160.8 281.1,160.5 285.0,162.0 288.8,161.0 292.7,162.0 296.6,161.5 300.5,162.0 304.4,162.9 308.3,158.8 312.2,161.5 316.0,160.1 319.9,158.8 323.8,159.7 327.7,158.3"/><polyline fill="none" stroke="#eab839" stroke-width="2" stroke-linejoin="round" points="51.8,165.6 55.7,165.6 59.6,165.4 63.5,165.8 67.3,165.6 71.2,165.4 75.1,164.7 79.0,164.7 82.9,165.4 86.8,165.6 90.7,165.6 94.5,165.6 98.4,165.1 102.3,164.7 106.2,165.4 110.1,165.6 114.0,165.6 117.9,165.4 121.7,165.6 125.6,156.8 129.5,165.9 133.4,165.9 137.3,161.5 141.2,165.1 145.1,165.6 148.9,165.6 152.8,165.6 156.7,165.6 160.6,165.6 164.5,165.6 168.4,165.4 172.3,164.7 176.2,164.9 180.0,165.4 183.9,165.1 187.8,165.1 191.7,165.1 195.6,165.4 199.5,165.1 203.4,164.7 207.2,165.1 211.1,164.1 215.0,165.1 218.9,165.4 222.8,153.1 226.7,165.1 230.6,165.4 234.4,165.1 238.3,165.1 242.2,165.1 246.1,164.9 250.0,164.9 253.9,165.6 257.8,165.1 261.6,164.9 265.5,165.4 269.4,165.4 273.3,164.9 277.2,165.1 281.1,164.1 285.0,165.4 288.8,164.9 292.7,165.8 296.6,165.4 300.5,165.1 304.4,165.1 308.3,165.1 312.2,165.1 316.0,165.4 319.9,165.1 323.8,165.1 327.7,164.7"/><polyline fill="none" stroke="#6ed0e0" stroke-width="2" stroke-linejoin="round" points="51.8,167.0 55.7,167.0 59.6,167.3 63.5,167.4 67.3,167.0 71.2,167.3 75.1,167.4 79.0,167.0 82.9,167.0 86.8,167.3 90.7,167.0 94.5,167.4 98.4,167.3 102.3,167.0 106.2,167.0 110.1,167.0 114.0,166.7 117.9,165.1 121.7,166.7 125.6,165.1 129.5,159.4 133.4,166.2 137.3,165.6 141.2,166.7 145.1,167.0 148.9,167.0 152.8,167.0 156.7,167.0 160.6,167.0 164.5,167.0 168.4,167.3 172.3,167.0 176.2,167.0 180.0,167.0 183.9,167.0 187.8,167.0 191.7,167.0 195.6,166.7 199.5,166.5 203.4,166.7 207.2,166.5 211.1,166.3 215.0,166.5 218.9,166.7 222.8,167.0 226.7,167.0 230.6,167.0 234.4,167.0 238.3,167.0 242.2,167.3 246.1,167.4 250.0,167.3 253.9,167.4 257.8,167.0 261.6,167.3 265.5,167.3 269.4,167.3 273.3,167.4 277.2,167.3 281.1,167.0 285.0,167.3 288.8,167.4 292.7,167.4 296.6,167.3 300.5,167.0 304.4,167.3 308.3,167.0 312.2,167.0 316.0,167.3 319.9,167.0 323.8,166.7 327.7,166.2"/><g fill="#cccccc"><circle cx="354.8" cy="190.3" r="1.65"/><circle cx="354.8" cy="193.6" r="1.65"/><circle cx="351.5" cy="193.6" r="1.65"/><circle cx="354.8" cy="196.9" r="1.65"/><circle cx="351.5" cy="196.9" r="1.65"/><circle cx="348.2" cy="196.9" r="1.65"/></g></svg></div>
<div class="abs panel" style="left:381px;top:622px"><div class="abs ptitle">tst</div><svg class="abs" style="left:0;top:0;overflow:visible" width="355" height="198" viewBox="1 1 355 198"><g stroke="#f0f0f0" stroke-width="1" shape-rendering="crispEdges"><line x1="57.4" x2="330.6" y1="35.5" y2="35.5"/><line x1="57.4" x2="330.6" y1="62.5" y2="62.5"/><line x1="57.4" x2="330.6" y1="89.5" y2="89.5"/><line x1="57.4" x2="330.6" y1="117.5" y2="117.5"/><line x1="57.4" x2="330.6" y1="144.5" y2="144.5"/><line x1="57.4" x2="330.6" y1="172.5" y2="172.5"/><line x1="100.5" x2="100.5" y1="35" y2="173"/><line x1="191.5" x2="191.5" y1="35" y2="173"/><line x1="282.5" x2="282.5" y1="35" y2="173"/></g><text x="51.4" y="40.0" text-anchor="end">100 ms</text><text x="51.4" y="67.0" text-anchor="end">80 ms</text><text x="51.4" y="94.0" text-anchor="end">60 ms</text><text x="51.4" y="122.0" text-anchor="end">40 ms</text><text x="51.4" y="149.0" text-anchor="end">20 ms</text><text x="51.4" y="177.0" text-anchor="end">0 µs</text><text x="100.1" y="190" text-anchor="middle">16:00</text><text x="190.9" y="190" text-anchor="middle">00:00</text><text x="282.0" y="190" text-anchor="middle">08:00</text><polyline fill="none" stroke="#7eb26d" stroke-width="2" stroke-linejoin="round" points="58.1,158.3 61.9,167.9 65.7,62.1 69.5,68.7 73.3,158.0 77.1,168.3 80.9,169.5 84.7,169.7 88.5,169.8 92.3,169.1 96.1,169.2 99.9,169.9 103.7,169.3 107.5,169.9 111.3,169.9 115.1,169.2 118.9,169.9 122.7,169.5 126.5,169.7 130.3,169.7 134.1,167.9 137.9,166.5 141.7,163.8 145.5,162.0 149.3,166.5 153.0,165.1 156.8,156.5 160.6,158.0 164.4,161.2 168.2,162.8 172.0,163.5 175.8,161.2 179.6,165.1 183.4,168.3 187.2,169.2 191.0,169.8 194.8,169.0 198.6,169.0 202.4,168.9 206.2,170.0 210.0,169.5 213.8,169.8 217.6,169.0 221.4,169.0 225.2,169.6 229.0,169.2 232.8,169.9 236.6,168.8 240.4,169.2 244.2,169.6 247.9,169.8 251.7,169.8 255.5,169.7 259.3,169.4 263.1,169.3 266.9,169.5 270.7,168.9 274.5,169.1 278.3,169.4 282.1,169.1 285.9,168.8 289.7,168.7 293.5,169.0 297.3,169.9 301.1,169.1 304.9,168.9 308.7,169.0 312.5,169.2 316.3,169.4 320.1,169.2 323.9,169.4 327.7,169.6"/><polyline fill="none" stroke="#eab839" stroke-width="2" stroke-linejoin="round" points="58.1,129.8 61.9,165.8 65.7,169.4 69.5,169.3 73.3,169.4 77.1,170.3 80.9,169.4 84.7,169.8 88.5,169.6 92.3,170.3 96.1,170.3 99.9,169.3 103.7,170.0 107.5,169.7 111.3,169.4 115.1,170.0 118.9,170.2 122.7,170.1 126.5,169.4 130.3,169.6 134.1,167.9 137.9,166.5 141.7,165.1 145.5,163.8 149.3,166.5 153.0,165.1 156.8,159.7 160.6,160.4 164.4,163.5 168.2,163.8 172.0,164.5 175.8,163.8 179.6,166.5 183.4,168.6 187.2,169.4 191.0,169.7 194.8,169.9 198.6,169.5 202.4,169.8 206.2,170.2 210.0,169.5 213.8,169.3 217.6,169.5 221.4,169.7 225.2,170.2 229.0,169.4 232.8,170.1 236.6,169.7 240.4,170.0 244.2,169.4 247.9,169.4 251.7,169.3 255.5,170.0 259.3,170.2 263.1,169.2 266.9,169.7 270.7,169.0 274.5,169.3 278.3,169.0 282.1,169.2 285.9,169.4 289.7,169.6 293.5,169.6 297.3,169.7 301.1,169.4 304.9,169.2 308.7,169.2 312.5,170.3 316.3,170.1 320.1,170.2 323.9,170.3 327.7,169.8"/><polyline fill="none" stroke="#6ed0e0" stroke-width="2" stroke-linejoin="round" points="58.1,163.8 61.9,168.6 65.7,169.9 69.5,169.2 73.3,169.5 77.1,169.9 80.9,170.0 84.7,169.5 88.5,170.1 92.3,170.0 96.1,169.9 99.9,169.4 103.7,169.2 107.5,169.2 111.3,169.5 115.1,169.2 118.9,170.1 122.7,169.2 126.5,169.8 130.3,170.1 134.1,167.9 137.9,165.1 141.7,161.0 145.5,159.7 149.3,165.1 153.0,163.8 156.8,150.2 160.6,153.4 164.4,158.3 168.2,159.7 172.0,161.0 175.8,159.7 179.6,165.1 183.4,167.9 187.2,169.1 191.0,170.2 194.8,169.3 198.6,169.5 202.4,169.1 206.2,169.9 210.0,169.1 213.8,169.3 217.6,169.5 221.4,170.0 225.2,169.2 229.0,169.2 232.8,170.0 236.6,169.1 240.4,169.2 244.2,169.9 247.9,169.8 251.7,169.6 255.5,170.0 259.3,169.4 263.1,169.8 266.9,169.5 270.7,168.6 274.5,169.0 278.3,169.1 282.1,168.7 285.9,169.6 289.7,168.8 293.5,169.7 297.3,170.2 301.1,169.3 304.9,169.0 308.7,168.9 312.5,169.9 316.3,169.2 320.1,169.8 323.9,169.6 327.7,169.7"/><polyline fill="none" stroke="#ef843c" stroke-width="2" stroke-linejoin="round" points="58.1,161.0 61.9,167.9 65.7,168.8 69.5,168.5 73.3,169.1 77.1,169.0 80.9,169.0 84.7,168.7 88.5,168.9 92.3,169.2 96.1,169.0 99.9,168.9 103.7,169.0 107.5,169.2 111.3,169.2 115.1,169.1 118.9,169.4 122.7,168.9 126.5,168.6 130.3,169.0 134.1,165.8 137.9,162.8 141.7,158.0 145.5,157.2 149.3,163.5 153.0,161.2 156.8,148.7 160.6,148.7 164.4,154.9 168.2,155.6 172.0,159.7 175.8,155.7 179.6,161.2 183.4,167.5 187.2,169.5 191.0,169.1 194.8,169.3 198.6,169.0 202.4,168.9 206.2,169.1 210.0,169.3 213.8,168.8 217.6,169.0 221.4,168.7 225.2,168.8 229.0,169.5 232.8,169.3 236.6,169.0 240.4,169.0 244.2,168.8 247.9,168.5 251.7,169.2 255.5,169.4 259.3,169.3 263.1,168.6 266.9,168.6 270.7,168.6 274.5,168.0 278.3,168.5 282.1,168.6 285.9,169.2 289.7,168.4 293.5,168.1 297.3,169.1 301.1,168.6 304.9,168.1 308.7,168.0 312.5,169.0 316.3,168.9 320.1,168.8 323.9,169.5 327.7,169.1"/><polyline fill="none" stroke="#e24d42" stroke-width="2" stroke-linejoin="round" points="58.1,162.4 61.9,167.9 65.7,169.8 69.5,168.9 73.3,169.6 77.1,169.0 80.9,169.0 84.7,168.8 88.5,168.7 92.3,169.4 96.1,169.0 99.9,169.4 103.7,169.7 107.5,169.0 111.3,169.7 115.1,168.7 118.9,169.8 122.7,169.5 126.5,169.4 130.3,168.9 134.1,166.5 137.9,163.8 141.7,158.0 145.5,159.7 149.3,164.3 153.0,162.8 156.8,151.0 160.6,151.0 164.4,156.5 168.2,153.4 172.0,161.2 175.8,159.7 179.6,163.5 183.4,168.3 187.2,169.6 191.0,168.9 194.8,169.1 198.6,169.4 202.4,168.6 206.2,169.3 210.0,169.3 213.8,169.3 217.6,169.4 221.4,169.4 225.2,169.4 229.0,169.7 232.8,169.6 236.6,168.8 240.4,169.7 244.2,169.7 247.9,169.2 251.7,168.8 255.5,169.8 259.3,168.9 263.1,168.5 266.9,168.8 270.7,168.7 274.5,168.2 278.3,168.1 282.1,168.7 285.9,168.7 289.7,168.2 293.5,168.6 297.3,168.9 301.1,168.9 304.9,168.4 308.7,168.2 312.5,169.1 316.3,169.6 320.1,168.7 323.9,169.3 327.7,169.4"/><polyline fill="none" stroke="#1f78c1" stroke-width="2" stroke-linejoin="round" points="58.1,165.1 61.9,168.6 65.7,169.4 69.5,168.9 73.3,168.8 77.1,168.8 80.9,169.7 84.7,169.8 88.5,169.4 92.3,169.3 96.1,168.7 99.9,169.6 103.7,169.1 107.5,169.7 111.3,169.0 115.1,169.3 118.9,168.7 122.7,169.8 126.5,168.8 130.3,169.6 134.1,167.2 137.9,165.1 141.7,162.0 145.5,160.4 149.3,165.1 153.0,163.5 156.8,152.5 160.6,154.9 164.4,158.8 168.2,158.0 172.0,160.4 175.8,159.7 179.6,164.3 183.4,168.3 187.2,169.5 191.0,169.6 194.8,169.7 198.6,169.5 202.4,169.2 206.2,169.2 210.0,169.1 213.8,168.5 217.6,169.6 221.4,168.8 225.2,169.7 229.0,169.6 232.8,169.5 236.6,169.4 240.4,169.1 244.2,169.2 247.9,169.7 251.7,169.2 255.5,168.7 259.3,169.5 263.1,169.2 266.9,168.7 270.7,168.5 274.5,168.0 278.3,168.4 282.1,168.4 285.9,169.0 289.7,168.7 293.5,168.9 297.3,169.5 301.1,169.0 304.9,168.4 308.7,169.2 312.5,168.9 316.3,168.9 320.1,169.5 323.9,169.9 327.7,169.4"/><polyline fill="none" stroke="#ba43a9" stroke-width="2" stroke-linejoin="round" points="58.1,153.4 61.9,165.8 65.7,168.7 69.5,168.7 73.3,168.7 77.1,169.4 80.9,169.1 84.7,169.4 88.5,168.6 92.3,168.9 96.1,169.3 99.9,168.5 103.7,169.3 107.5,169.0 111.3,169.0 115.1,169.5 118.9,168.5 122.7,168.8 126.5,169.0 130.3,168.9 134.1,167.2 137.9,165.1 141.7,162.4 145.5,159.7 149.3,165.1 153.0,163.8 156.8,155.6 160.6,157.6 164.4,161.0 168.2,161.7 172.0,163.1 175.8,162.4 179.6,165.1 183.4,168.3 187.2,169.2 191.0,168.9 194.8,168.9 198.6,169.4 202.4,168.3 206.2,168.8 210.0,168.6 213.8,168.4 217.6,169.4 221.4,169.0 225.2,168.6 229.0,169.2 232.8,169.3 236.6,168.7 240.4,169.3 244.2,168.5 247.9,168.8 251.7,169.3 255.5,168.6 259.3,168.6 263.1,168.5 266.9,168.3 270.7,167.9 274.5,167.6 278.3,168.3 282.1,167.8 285.9,169.0 289.7,167.7 293.5,168.8 297.3,168.7 301.1,168.7 304.9,168.0 308.7,168.8 312.5,169.5 316.3,169.0 320.1,168.9 323.9,169.1 327.7,169.2"/><polyline fill="none" stroke="#705da0" stroke-width="2" stroke-linejoin="round" points="58.1,163.8 61.9,167.9 65.7,169.6 69.5,169.0 73.3,169.3 77.1,169.4 80.9,169.1 84.7,169.5 88.5,169.5 92.3,169.0 96.1,169.3 99.9,168.9 103.7,168.9 107.5,168.9 111.3,169.6 115.1,169.2 118.9,168.8 122.7,169.4 126.5,168.7 130.3,168.8 134.1,167.2 137.9,165.1 141.7,160.4 145.5,156.5 149.3,164.3 153.0,162.8 156.8,154.2 160.6,156.5 164.4,160.4 168.2,161.0 172.0,162.4 175.8,161.7 179.6,165.1 183.4,168.3 187.2,169.3 191.0,168.7 194.8,168.7 198.6,168.7 202.4,169.2 206.2,169.0 210.0,169.7 213.8,168.9 217.6,168.8 221.4,169.7 225.2,169.2 229.0,169.4 232.8,169.5 236.6,168.5 240.4,168.9 244.2,169.4 247.9,169.6 251.7,168.9 255.5,168.9 259.3,169.4 263.1,168.4 266.9,168.5 270.7,168.1 274.5,168.9 278.3,169.0 282.1,169.0 285.9,168.6 289.7,168.6 293.5,168.3 297.3,169.6 301.1,169.1 304.9,168.3 308.7,169.0 312.5,169.5 316.3,169.6 320.1,168.9 323.9,169.9 327.7,169.4"/><polyline fill="none" stroke="#508642" stroke-width="2" stroke-linejoin="round" points="58.1,159.7 61.9,167.9 65.7,169.2 69.5,169.0 73.3,169.5 77.1,169.1 80.9,168.7 84.7,169.4 88.5,169.0 92.3,168.9 96.1,169.0 99.9,169.2 103.7,169.4 107.5,169.6 111.3,168.8 115.1,169.7 118.9,168.9 122.7,169.7 126.5,169.3 130.3,169.5 134.1,167.9 137.9,165.8 141.7,162.8 145.5,162.0 149.3,165.8 153.0,164.3 156.8,156.5 160.6,158.0 164.4,161.2 168.2,162.8 172.0,163.5 175.8,161.2 179.6,165.1 183.4,168.3 187.2,169.2 191.0,169.4 194.8,169.4 198.6,168.9 202.4,168.6 206.2,168.9 210.0,169.4 213.8,169.1 217.6,168.9 221.4,169.1 225.2,169.5 229.0,169.3 232.8,169.5 236.6,169.1 240.4,169.4 244.2,168.9 247.9,169.0 251.7,169.3 255.5,169.0 259.3,168.8 263.1,169.1 266.9,168.4 270.7,168.9 274.5,168.7 278.3,168.2 282.1,168.7 285.9,168.9 289.7,168.0 293.5,168.6 297.3,169.2 301.1,169.1 304.9,168.3 308.7,168.9 312.5,169.3 316.3,168.9 320.1,169.7 323.9,169.4 327.7,169.4"/><polyline fill="none" stroke="#cca300" stroke-width="2" stroke-linejoin="round" points="58.1,165.1 61.9,167.9 65.7,169.0 69.5,169.4 73.3,170.1 77.1,169.2 80.9,169.8 84.7,169.5 88.5,169.9 92.3,169.0 96.1,169.0 99.9,169.6 103.7,169.0 107.5,169.4 111.3,169.4 115.1,169.4 118.9,169.2 122.7,169.2 126.5,170.1 130.3,169.4 134.1,167.9 137.9,166.5 141.7,164.5 145.5,163.8 149.3,166.5 153.0,165.1 156.8,159.7 160.6,160.4 164.4,163.5 168.2,164.3 172.0,165.1 175.8,164.3 179.6,166.5 183.4,168.6 187.2,169.4 191.0,169.2 194.8,169.2 198.6,169.3 202.4,169.5 206.2,169.0 210.0,169.5 213.8,169.7 217.6,169.4 221.4,169.8 225.2,170.0 229.0,169.5 232.8,169.8 236.6,169.0 240.4,169.0 244.2,169.8 247.9,169.7 251.7,169.9 255.5,169.4 259.3,169.6 263.1,169.1 266.9,169.7 270.7,169.0 274.5,169.0 278.3,168.8 282.1,168.8 285.9,169.5 289.7,168.8 293.5,169.2 297.3,169.0 301.1,169.5 304.9,168.6 308.7,169.1 312.5,169.3 316.3,169.6 320.1,169.6 323.9,169.1 327.7,169.7"/><polyline fill="none" stroke="#447ebc" stroke-width="2" stroke-linejoin="round" points="58.1,165.1 61.9,167.9 65.7,169.2 69.5,168.8 73.3,168.7 77.1,169.5 80.9,168.9 84.7,168.8 88.5,168.9 92.3,169.5 96.1,169.3 99.9,169.3 103.7,168.9 107.5,168.4 111.3,169.1 115.1,169.3 118.9,168.7 122.7,169.0 126.5,169.0 130.3,169.5 134.1,167.9 137.9,165.8 141.7,163.1 145.5,161.7 149.3,165.8 153.0,164.5 156.8,157.6 160.6,159.0 164.4,161.7 168.2,162.4 172.0,163.8 175.8,163.1 179.6,165.8 183.4,168.6 187.2,168.8 191.0,169.3 194.8,169.2 198.6,168.9 202.4,168.3 206.2,169.5 210.0,168.7 213.8,168.2 217.6,169.0 221.4,168.6 225.2,168.7 229.0,168.9 232.8,169.2 236.6,169.0 240.4,168.9 244.2,168.8 247.9,168.6 251.7,168.7 255.5,168.9 259.3,168.4 263.1,169.2 266.9,169.0 270.7,168.1 274.5,168.1 278.3,168.4 282.1,167.8 285.9,169.2 289.7,168.6 293.5,168.8 297.3,169.1 301.1,168.9 304.9,167.8 308.7,168.4 312.5,168.6 316.3,169.4 320.1,168.8 323.9,169.2 327.7,169.2"/><polyline fill="none" stroke="#c15c17" stroke-width="2" stroke-linejoin="round" points="58.1,163.8 61.9,167.9 65.7,169.0 69.5,169.2 73.3,169.2 77.1,169.5 80.9,168.8 84.7,168.9 88.5,169.8 92.3,169.6 96.1,169.3 99.9,169.8 103.7,169.6 107.5,169.4 111.3,169.7 115.1,169.0 118.9,169.0 122.7,169.6 126.5,169.8 130.3,169.4 134.1,167.9 137.9,166.5 141.7,165.1 145.5,164.5 149.3,166.5 153.0,165.8 156.8,161.2 160.6,162.0 164.4,164.3 168.2,165.1 172.0,165.1 175.8,164.5 179.6,166.5 183.4,168.6 187.2,168.9 191.0,169.2 194.8,169.0 198.6,169.3 202.4,169.2 206.2,169.6 210.0,169.8 213.8,168.7 217.6,169.4 221.4,169.3 225.2,169.3 229.0,169.0 232.8,169.5 236.6,168.8 240.4,169.6 244.2,169.7 247.9,169.3 251.7,169.3 255.5,169.3 259.3,169.2 263.1,169.1 266.9,169.2 270.7,168.2 274.5,168.3 278.3,169.1 282.1,169.0 285.9,168.8 289.7,168.3 293.5,168.3 297.3,168.9 301.1,169.3 304.9,168.1 308.7,168.6 312.5,169.7 316.3,169.0 320.1,168.7 323.9,168.9 327.7,169.5"/><polyline fill="none" stroke="#890f02" stroke-width="2" stroke-linejoin="round" points="58.1,165.1 61.9,168.6 65.7,170.0 69.5,169.6 73.3,169.9 77.1,169.7 80.9,170.0 84.7,169.3 88.5,169.7 92.3,169.9 96.1,169.5 99.9,169.4 103.7,169.4 107.5,169.4 111.3,169.4 115.1,169.9 118.9,169.5 122.7,169.3 126.5,169.6 130.3,169.4 134.1,168.6 137.9,167.9 141.7,166.5 145.5,165.8 149.3,168.3 153.0,167.5 156.8,163.5 160.6,164.3 164.4,165.8 168.2,166.5 172.0,165.8 175.8,165.1 179.6,167.5 183.4,169.0 187.2,169.3 191.0,169.2 194.8,170.0 198.6,169.9 202.4,169.1 206.2,169.9 210.0,169.9 213.8,169.4 217.6,170.0 221.4,170.1 225.2,169.9 229.0,169.4 232.8,169.9 236.6,169.8 240.4,169.4 244.2,169.6 247.9,169.2 251.7,169.1 255.5,169.8 259.3,170.1 263.1,169.2 266.9,169.5 270.7,169.6 274.5,168.8 278.3,168.8 282.1,169.2 285.9,169.5 289.7,169.3 293.5,169.0 297.3,169.9 301.1,169.7 304.9,168.7 308.7,169.0 312.5,169.9 316.3,169.8 320.1,169.9 323.9,169.9 327.7,169.9"/><polyline fill="none" stroke="#0a437c" stroke-width="2" stroke-linejoin="round" points="58.1,166.5 61.9,168.6 65.7,169.4 69.5,169.4 73.3,169.8 77.1,169.2 80.9,169.4 84.7,169.8 88.5,169.0 92.3,169.5 96.1,169.0 99.9,169.3 103.7,169.6 107.5,169.8 111.3,169.4 115.1,169.1 118.9,169.3 122.7,169.3 126.5,169.8 130.3,169.8 134.1,168.6 137.9,167.9 141.7,167.2 145.5,166.5 149.3,168.3 153.0,167.9 156.8,165.1 160.6,165.8 164.4,166.5 168.2,167.2 172.0,167.2 175.8,166.5 179.6,167.9 183.4,169.0 187.2,168.9 191.0,169.5 194.8,169.3 198.6,169.7 202.4,169.3 206.2,169.5 210.0,169.4 213.8,169.3 217.6,169.8 221.4,169.3 225.2,169.0 229.0,169.0 232.8,169.6 236.6,169.1 240.4,169.6 244.2,169.0 247.9,169.4 251.7,164.1 255.5,169.6 259.3,169.3 263.1,169.5 266.9,169.1 270.7,169.0 274.5,168.3 278.3,168.7 282.1,168.6 285.9,169.5 289.7,168.4 293.5,168.9 297.3,169.2 301.1,169.5 304.9,168.3 308.7,168.6 312.5,169.4 316.3,169.8 320.1,169.3 323.9,169.1 327.7,169.6"/><polyline fill="none" stroke="#6d1f62" stroke-width="2" stroke-linejoin="round" points="58.1,166.5 61.9,167.9 65.7,168.5 69.5,168.9 73.3,168.6 77.1,168.5 80.9,168.6 84.7,169.1 88.5,169.0 92.3,168.8 96.1,169.1 99.9,168.9 103.7,168.5 107.5,168.8 111.3,169.0 115.1,169.0 118.9,168.8 122.7,169.0 126.5,168.8 130.3,168.9 134.1,168.2 137.9,167.9 141.7,167.5 145.5,167.2 149.3,167.9 153.0,167.6 156.8,165.8 160.6,166.5 164.4,167.2 168.2,167.5 172.0,167.5 175.8,167.2 179.6,167.9 183.4,168.2 187.2,169.2 191.0,168.6 194.8,168.4 198.6,169.3 202.4,167.1 206.2,168.9 210.0,168.7 213.8,164.3 217.6,168.5 221.4,169.1 225.2,168.7 229.0,168.5 232.8,169.0 236.6,168.2 240.4,168.5 244.2,168.9 247.9,169.2 251.7,168.9 255.5,169.1 259.3,169.2 263.1,168.5 266.9,168.4 270.7,168.1 274.5,167.5 278.3,168.3 282.1,167.7 285.9,168.3 289.7,168.1 293.5,168.5 297.3,169.1 301.1,168.9 304.9,167.6 308.7,167.9 312.5,168.7 316.3,168.7 320.1,168.6 323.9,169.1 327.7,169.2"/><g fill="#cccccc"><circle cx="354.8" cy="190.3" r="1.65"/><circle cx="354.8" cy="193.6" r="1.65"/><circle cx="351.5" cy="193.6" r="1.65"/><circle cx="354.8" cy="196.9" r="1.65"/><circle cx="351.5" cy="196.9" r="1.65"/><circle cx="348.2" cy="196.9" r="1.65"/></g></svg></div>
<div class="abs panel" style="left:749px;top:622px"><div class="abs" style="left:155px;top:5px;width:50px;height:18px;background:#c3c3c3"></div><svg class="abs" style="left:0;top:0;overflow:visible" width="355" height="198" viewBox="1 1 355 198"><g stroke="#f0f0f0" stroke-width="1" shape-rendering="crispEdges"><line x1="50.0" x2="330.6" y1="35.5" y2="35.5"/><line x1="50.0" x2="330.6" y1="57.5" y2="57.5"/><line x1="50.0" x2="330.6" y1="80.5" y2="80.5"/><line x1="50.0" x2="330.6" y1="103.5" y2="103.5"/><line x1="50.0" x2="330.6" y1="126.5" y2="126.5"/><line x1="50.0" x2="330.6" y1="149.5" y2="149.5"/><line x1="50.0" x2="330.6" y1="172.5" y2="172.5"/><line x1="94.5" x2="94.5" y1="35" y2="173"/><line x1="187.5" x2="187.5" y1="35" y2="173"/><line x1="281.5" x2="281.5" y1="35" y2="173"/></g><text x="44.0" y="40.0" text-anchor="end">30 ms</text><text x="44.0" y="62.0" text-anchor="end">25 ms</text><text x="44.0" y="85.0" text-anchor="end">20 ms</text><text x="44.0" y="108.0" text-anchor="end">15 ms</text><text x="44.0" y="131.0" text-anchor="end">10 ms</text><text x="44.0" y="154.0" text-anchor="end">5 ms</text><text x="44.0" y="177.0" text-anchor="end">0 µs</text><text x="94.2" y="190" text-anchor="middle">16:00</text><text x="187.0" y="190" text-anchor="middle">00:00</text><text x="281.0" y="190" text-anchor="middle">08:00</text><polyline fill="none" stroke="#7eb26d" stroke-width="2" stroke-linejoin="round" points="51.8,159.2 55.7,162.4 59.6,162.9 63.5,157.8 67.3,153.0 71.2,167.2 75.1,167.9 79.0,167.0 82.9,167.4 86.8,167.2 90.7,166.3 94.5,165.6 98.4,164.7 102.3,162.9 106.2,163.8 110.1,162.9 114.0,165.1 117.9,161.5 121.7,159.2 125.6,157.8 129.5,150.1 133.4,132.3 137.3,111.9 141.2,101.4 145.1,138.2 148.9,114.9 152.8,52.4 156.7,68.3 160.6,93.9 164.5,132.3 168.4,119.0 172.3,97.6 176.2,126.8 180.0,153.0 183.9,161.0 187.8,159.7 191.7,164.0 195.6,165.6 199.5,163.6 203.4,165.4 207.2,162.0 211.1,165.6 215.0,165.6 218.9,167.2 222.8,165.4 226.7,165.4 230.6,166.3 234.4,158.8 238.3,164.2 242.2,165.6 246.1,156.2 250.0,131.1 253.9,157.4 257.8,156.2 261.6,153.0 265.5,155.3 269.4,148.9 273.3,155.8 277.2,152.1 281.1,167.0 285.0,146.0 288.8,162.0 292.7,161.3 296.6,152.1 300.5,146.7 304.4,161.5 308.3,163.8 312.2,165.8 316.0,162.9 319.9,153.0 323.8,164.0 327.7,166.3"/><g fill="#cccccc"><circle cx="354.8" cy="190.3" r="1.65"/><circle cx="354.8" cy="193.6" r="1.65"/><circle cx="351.5" cy="193.6" r="1.65"/><circle cx="354.8" cy="196.9" r="1.65"/><circle cx="351.5" cy="196.9" r="1.65"/><circle cx="348.2" cy="196.9" r="1.65"/></g></svg></div>
<div class="abs" style="left:19px;top:834px;width:87px;height:25px;background:linear-gradient(#ececec,#e2e2e2);border-radius:2px;box-shadow:0 1px 0 #dadada"></div>
<svg class="abs" style="left:25px;top:840px" width="12" height="12" viewBox="0 0 12 12"><path d="M1 6 H11 M6 1 V11" stroke="#222" stroke-width="2.4" fill="none"/></svg>
<div class="abs" style="left:39px;top:838px;font-size:11.8px;line-height:18px;color:#444;white-space:nowrap">ADD ROW</div>
</body></html>
